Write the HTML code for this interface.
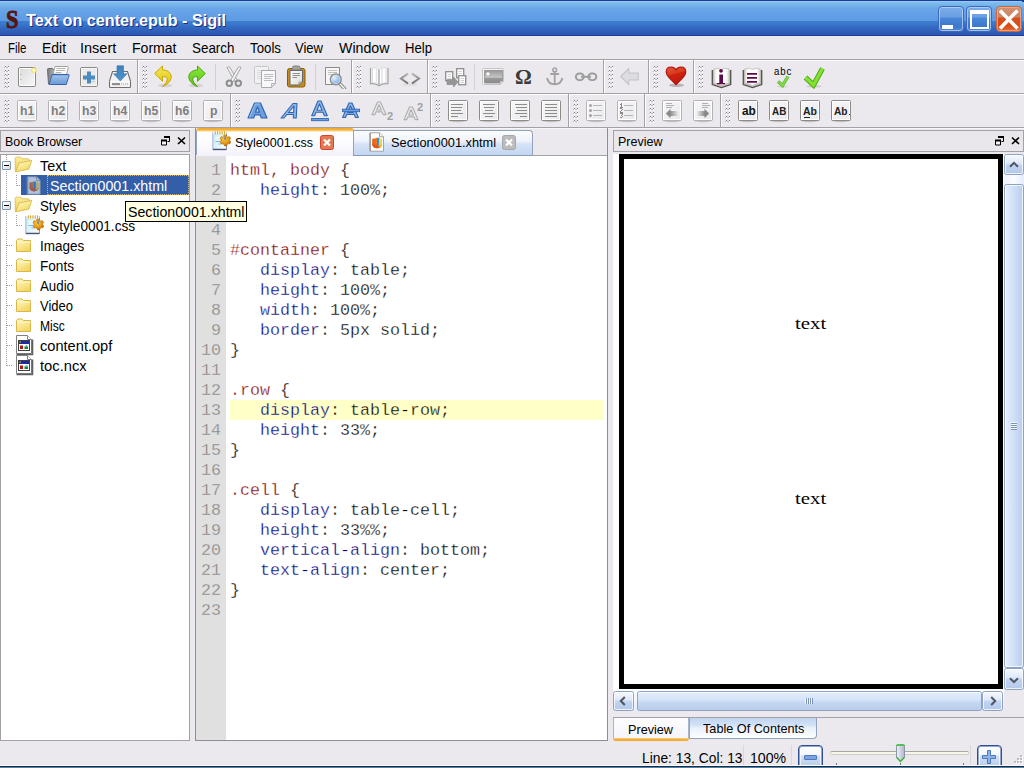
<!DOCTYPE html>
<html><head><meta charset="utf-8"><title>Sigil</title>
<style>
html,body{margin:0;padding:0;}
body{width:1024px;height:768px;overflow:hidden;position:relative;background:#ebe9ed;font-family:"Liberation Sans",sans-serif;font-size:14px;}
body div,body svg,body span.t{position:absolute;}
span.t{white-space:pre;line-height:20px;transform-origin:0 50%;display:block;}
.g{width:5px;height:23px;background:repeating-linear-gradient(to bottom,#a9a7ad 0,#a9a7ad 1px,#fff 1px,#fff 2px,rgba(0,0,0,0) 2px,rgba(0,0,0,0) 4px);}
.hb{width:18px;height:19px;border:1px solid #b4b4b8;border-radius:1px;background:linear-gradient(#fbfbfc,#e9e9ec);box-shadow:0 1px 1px rgba(0,0,0,0.18);}
</style></head><body>
<div style="left:0px;top:0px;width:1024px;height:36px;background:linear-gradient(to bottom,#1c3c9c 0,#1c3c9c 1px,#98c8f0 1px,#98c8f0 2px,#82c0ec 2px,#74b4ea 5px,#68a5e8 9px,#639fe6 15px,#5f9ae3 20.500px,#3a80d0 21px,#3873c8 25px,#3264be 29px,#2d58b2 34.500px,#1c3c9c 35px,#1c3c9c 36px);"></div>
<div style="left:0px;top:0px;width:2px;height:1px;background:#1a3a90;"></div>
<div style="left:1022px;top:0px;width:2px;height:2px;background:#1a3a90;"></div>
<span class="t" style="left:26.30px;top:10.00px;line-height:21px;font-size:16px;color:#fff;font-weight:bold;transform:scaleX(1.0104);text-shadow:1px 1px 0 #1a2f86;">Text on center.epub - Sigil</span>
<span class="t" style="left:8.00px;top:38.00px;line-height:20px;font-size:14px;color:#000;transform:scaleX(0.8201);">File</span>
<span class="t" style="left:41.50px;top:38.00px;line-height:20px;font-size:14px;color:#000;transform:scaleX(0.9949);">Edit</span>
<span class="t" style="left:80.00px;top:38.00px;line-height:20px;font-size:14px;color:#000;transform:scaleX(1.0368);">Insert</span>
<span class="t" style="left:132.00px;top:38.00px;line-height:20px;font-size:14px;color:#000;transform:scaleX(1.0037);">Format</span>
<span class="t" style="left:191.50px;top:38.00px;line-height:20px;font-size:14px;color:#000;transform:scaleX(0.9582);">Search</span>
<span class="t" style="left:249.50px;top:38.00px;line-height:20px;font-size:14px;color:#000;transform:scaleX(0.9486);">Tools</span>
<span class="t" style="left:295.00px;top:38.00px;line-height:20px;font-size:14px;color:#000;transform:scaleX(0.9305);">View</span>
<span class="t" style="left:339.00px;top:38.00px;line-height:20px;font-size:14px;color:#000;transform:scaleX(1.0142);">Window</span>
<span class="t" style="left:404.50px;top:38.00px;line-height:20px;font-size:14px;color:#000;transform:scaleX(0.9378);">Help</span>
<div style="left:0px;top:59px;width:1024px;height:1px;background:#a3a1a6;"></div>
<div style="left:0px;top:60px;width:1024px;height:1px;background:#fff;"></div>
<div style="left:0px;top:93px;width:1024px;height:1px;background:#a3a1a6;"></div>
<div style="left:0px;top:94px;width:1024px;height:1px;background:#fff;"></div>
<div style="left:0px;top:127px;width:1024px;height:1px;background:#a3a1a6;"></div>
<div style="left:0px;top:128px;width:1024px;height:1px;background:#f7f6f9;"></div>
<div style="left:137px;top:60px;width:1px;height:33px;background:#a3a1a6;"></div>
<div style="left:138px;top:61px;width:1px;height:32px;background:#fff;"></div>
<div style="left:351px;top:60px;width:1px;height:33px;background:#a3a1a6;"></div>
<div style="left:352px;top:61px;width:1px;height:32px;background:#fff;"></div>
<div style="left:427px;top:60px;width:1px;height:33px;background:#a3a1a6;"></div>
<div style="left:428px;top:61px;width:1px;height:32px;background:#fff;"></div>
<div style="left:603px;top:60px;width:1px;height:33px;background:#a3a1a6;"></div>
<div style="left:604px;top:61px;width:1px;height:32px;background:#fff;"></div>
<div style="left:648px;top:60px;width:1px;height:33px;background:#a3a1a6;"></div>
<div style="left:649px;top:61px;width:1px;height:32px;background:#fff;"></div>
<div style="left:693px;top:60px;width:1px;height:33px;background:#a3a1a6;"></div>
<div style="left:694px;top:61px;width:1px;height:32px;background:#fff;"></div>
<div style="left:230px;top:94px;width:1px;height:33px;background:#a3a1a6;"></div>
<div style="left:231px;top:95px;width:1px;height:32px;background:#fff;"></div>
<div style="left:430px;top:94px;width:1px;height:33px;background:#a3a1a6;"></div>
<div style="left:431px;top:95px;width:1px;height:32px;background:#fff;"></div>
<div style="left:568px;top:94px;width:1px;height:33px;background:#a3a1a6;"></div>
<div style="left:569px;top:95px;width:1px;height:32px;background:#fff;"></div>
<div style="left:644px;top:94px;width:1px;height:33px;background:#a3a1a6;"></div>
<div style="left:645px;top:95px;width:1px;height:32px;background:#fff;"></div>
<div style="left:720px;top:94px;width:1px;height:33px;background:#a3a1a6;"></div>
<div style="left:721px;top:95px;width:1px;height:32px;background:#fff;"></div>
<svg style="left:4px;top:66px;" width="6" height="24" viewBox="0 0 6 24"><g shape-rendering="crispEdges"><path d="M1 0h1v1h-1zM4 0h1v1h-1zM1 4h1v1h-1zM4 4h1v1h-1zM1 8h1v1h-1zM4 8h1v1h-1zM1 12h1v1h-1zM4 12h1v1h-1zM1 16h1v1h-1zM4 16h1v1h-1zM1 20h1v1h-1zM4 20h1v1h-1z" fill="#7d7b82"/><path d="M0 1h1v1h-1zM2 1h2v1h-2zM0 5h1v1h-1zM2 5h2v1h-2zM0 9h1v1h-1zM2 9h2v1h-2zM0 13h1v1h-1zM2 13h2v1h-2zM0 17h1v1h-1zM2 17h2v1h-2zM0 21h1v1h-1zM2 21h2v1h-2z" fill="#bab8bf"/><path d="M1 1h1v2h-1zM4 1h1v2h-1zM1 5h1v2h-1zM4 5h1v2h-1zM1 9h1v2h-1zM4 9h1v2h-1zM1 13h1v2h-1zM4 13h1v2h-1zM1 17h1v2h-1zM4 17h1v2h-1zM1 21h1v2h-1zM4 21h1v2h-1z" fill="#fff"/></g></svg>
<svg style="left:142px;top:66px;" width="6" height="24" viewBox="0 0 6 24"><g shape-rendering="crispEdges"><path d="M1 0h1v1h-1zM4 0h1v1h-1zM1 4h1v1h-1zM4 4h1v1h-1zM1 8h1v1h-1zM4 8h1v1h-1zM1 12h1v1h-1zM4 12h1v1h-1zM1 16h1v1h-1zM4 16h1v1h-1zM1 20h1v1h-1zM4 20h1v1h-1z" fill="#7d7b82"/><path d="M0 1h1v1h-1zM2 1h2v1h-2zM0 5h1v1h-1zM2 5h2v1h-2zM0 9h1v1h-1zM2 9h2v1h-2zM0 13h1v1h-1zM2 13h2v1h-2zM0 17h1v1h-1zM2 17h2v1h-2zM0 21h1v1h-1zM2 21h2v1h-2z" fill="#bab8bf"/><path d="M1 1h1v2h-1zM4 1h1v2h-1zM1 5h1v2h-1zM4 5h1v2h-1zM1 9h1v2h-1zM4 9h1v2h-1zM1 13h1v2h-1zM4 13h1v2h-1zM1 17h1v2h-1zM4 17h1v2h-1zM1 21h1v2h-1zM4 21h1v2h-1z" fill="#fff"/></g></svg>
<svg style="left:356px;top:66px;" width="6" height="24" viewBox="0 0 6 24"><g shape-rendering="crispEdges"><path d="M1 0h1v1h-1zM4 0h1v1h-1zM1 4h1v1h-1zM4 4h1v1h-1zM1 8h1v1h-1zM4 8h1v1h-1zM1 12h1v1h-1zM4 12h1v1h-1zM1 16h1v1h-1zM4 16h1v1h-1zM1 20h1v1h-1zM4 20h1v1h-1z" fill="#7d7b82"/><path d="M0 1h1v1h-1zM2 1h2v1h-2zM0 5h1v1h-1zM2 5h2v1h-2zM0 9h1v1h-1zM2 9h2v1h-2zM0 13h1v1h-1zM2 13h2v1h-2zM0 17h1v1h-1zM2 17h2v1h-2zM0 21h1v1h-1zM2 21h2v1h-2z" fill="#bab8bf"/><path d="M1 1h1v2h-1zM4 1h1v2h-1zM1 5h1v2h-1zM4 5h1v2h-1zM1 9h1v2h-1zM4 9h1v2h-1zM1 13h1v2h-1zM4 13h1v2h-1zM1 17h1v2h-1zM4 17h1v2h-1zM1 21h1v2h-1zM4 21h1v2h-1z" fill="#fff"/></g></svg>
<svg style="left:432px;top:66px;" width="6" height="24" viewBox="0 0 6 24"><g shape-rendering="crispEdges"><path d="M1 0h1v1h-1zM4 0h1v1h-1zM1 4h1v1h-1zM4 4h1v1h-1zM1 8h1v1h-1zM4 8h1v1h-1zM1 12h1v1h-1zM4 12h1v1h-1zM1 16h1v1h-1zM4 16h1v1h-1zM1 20h1v1h-1zM4 20h1v1h-1z" fill="#7d7b82"/><path d="M0 1h1v1h-1zM2 1h2v1h-2zM0 5h1v1h-1zM2 5h2v1h-2zM0 9h1v1h-1zM2 9h2v1h-2zM0 13h1v1h-1zM2 13h2v1h-2zM0 17h1v1h-1zM2 17h2v1h-2zM0 21h1v1h-1zM2 21h2v1h-2z" fill="#bab8bf"/><path d="M1 1h1v2h-1zM4 1h1v2h-1zM1 5h1v2h-1zM4 5h1v2h-1zM1 9h1v2h-1zM4 9h1v2h-1zM1 13h1v2h-1zM4 13h1v2h-1zM1 17h1v2h-1zM4 17h1v2h-1zM1 21h1v2h-1zM4 21h1v2h-1z" fill="#fff"/></g></svg>
<svg style="left:608px;top:66px;" width="6" height="24" viewBox="0 0 6 24"><g shape-rendering="crispEdges"><path d="M1 0h1v1h-1zM4 0h1v1h-1zM1 4h1v1h-1zM4 4h1v1h-1zM1 8h1v1h-1zM4 8h1v1h-1zM1 12h1v1h-1zM4 12h1v1h-1zM1 16h1v1h-1zM4 16h1v1h-1zM1 20h1v1h-1zM4 20h1v1h-1z" fill="#7d7b82"/><path d="M0 1h1v1h-1zM2 1h2v1h-2zM0 5h1v1h-1zM2 5h2v1h-2zM0 9h1v1h-1zM2 9h2v1h-2zM0 13h1v1h-1zM2 13h2v1h-2zM0 17h1v1h-1zM2 17h2v1h-2zM0 21h1v1h-1zM2 21h2v1h-2z" fill="#bab8bf"/><path d="M1 1h1v2h-1zM4 1h1v2h-1zM1 5h1v2h-1zM4 5h1v2h-1zM1 9h1v2h-1zM4 9h1v2h-1zM1 13h1v2h-1zM4 13h1v2h-1zM1 17h1v2h-1zM4 17h1v2h-1zM1 21h1v2h-1zM4 21h1v2h-1z" fill="#fff"/></g></svg>
<svg style="left:653px;top:66px;" width="6" height="24" viewBox="0 0 6 24"><g shape-rendering="crispEdges"><path d="M1 0h1v1h-1zM4 0h1v1h-1zM1 4h1v1h-1zM4 4h1v1h-1zM1 8h1v1h-1zM4 8h1v1h-1zM1 12h1v1h-1zM4 12h1v1h-1zM1 16h1v1h-1zM4 16h1v1h-1zM1 20h1v1h-1zM4 20h1v1h-1z" fill="#7d7b82"/><path d="M0 1h1v1h-1zM2 1h2v1h-2zM0 5h1v1h-1zM2 5h2v1h-2zM0 9h1v1h-1zM2 9h2v1h-2zM0 13h1v1h-1zM2 13h2v1h-2zM0 17h1v1h-1zM2 17h2v1h-2zM0 21h1v1h-1zM2 21h2v1h-2z" fill="#bab8bf"/><path d="M1 1h1v2h-1zM4 1h1v2h-1zM1 5h1v2h-1zM4 5h1v2h-1zM1 9h1v2h-1zM4 9h1v2h-1zM1 13h1v2h-1zM4 13h1v2h-1zM1 17h1v2h-1zM4 17h1v2h-1zM1 21h1v2h-1zM4 21h1v2h-1z" fill="#fff"/></g></svg>
<svg style="left:698px;top:66px;" width="6" height="24" viewBox="0 0 6 24"><g shape-rendering="crispEdges"><path d="M1 0h1v1h-1zM4 0h1v1h-1zM1 4h1v1h-1zM4 4h1v1h-1zM1 8h1v1h-1zM4 8h1v1h-1zM1 12h1v1h-1zM4 12h1v1h-1zM1 16h1v1h-1zM4 16h1v1h-1zM1 20h1v1h-1zM4 20h1v1h-1z" fill="#7d7b82"/><path d="M0 1h1v1h-1zM2 1h2v1h-2zM0 5h1v1h-1zM2 5h2v1h-2zM0 9h1v1h-1zM2 9h2v1h-2zM0 13h1v1h-1zM2 13h2v1h-2zM0 17h1v1h-1zM2 17h2v1h-2zM0 21h1v1h-1zM2 21h2v1h-2z" fill="#bab8bf"/><path d="M1 1h1v2h-1zM4 1h1v2h-1zM1 5h1v2h-1zM4 5h1v2h-1zM1 9h1v2h-1zM4 9h1v2h-1zM1 13h1v2h-1zM4 13h1v2h-1zM1 17h1v2h-1zM4 17h1v2h-1zM1 21h1v2h-1zM4 21h1v2h-1z" fill="#fff"/></g></svg>
<svg style="left:4px;top:100px;" width="6" height="24" viewBox="0 0 6 24"><g shape-rendering="crispEdges"><path d="M1 0h1v1h-1zM4 0h1v1h-1zM1 4h1v1h-1zM4 4h1v1h-1zM1 8h1v1h-1zM4 8h1v1h-1zM1 12h1v1h-1zM4 12h1v1h-1zM1 16h1v1h-1zM4 16h1v1h-1zM1 20h1v1h-1zM4 20h1v1h-1z" fill="#7d7b82"/><path d="M0 1h1v1h-1zM2 1h2v1h-2zM0 5h1v1h-1zM2 5h2v1h-2zM0 9h1v1h-1zM2 9h2v1h-2zM0 13h1v1h-1zM2 13h2v1h-2zM0 17h1v1h-1zM2 17h2v1h-2zM0 21h1v1h-1zM2 21h2v1h-2z" fill="#bab8bf"/><path d="M1 1h1v2h-1zM4 1h1v2h-1zM1 5h1v2h-1zM4 5h1v2h-1zM1 9h1v2h-1zM4 9h1v2h-1zM1 13h1v2h-1zM4 13h1v2h-1zM1 17h1v2h-1zM4 17h1v2h-1zM1 21h1v2h-1zM4 21h1v2h-1z" fill="#fff"/></g></svg>
<svg style="left:235px;top:100px;" width="6" height="24" viewBox="0 0 6 24"><g shape-rendering="crispEdges"><path d="M1 0h1v1h-1zM4 0h1v1h-1zM1 4h1v1h-1zM4 4h1v1h-1zM1 8h1v1h-1zM4 8h1v1h-1zM1 12h1v1h-1zM4 12h1v1h-1zM1 16h1v1h-1zM4 16h1v1h-1zM1 20h1v1h-1zM4 20h1v1h-1z" fill="#7d7b82"/><path d="M0 1h1v1h-1zM2 1h2v1h-2zM0 5h1v1h-1zM2 5h2v1h-2zM0 9h1v1h-1zM2 9h2v1h-2zM0 13h1v1h-1zM2 13h2v1h-2zM0 17h1v1h-1zM2 17h2v1h-2zM0 21h1v1h-1zM2 21h2v1h-2z" fill="#bab8bf"/><path d="M1 1h1v2h-1zM4 1h1v2h-1zM1 5h1v2h-1zM4 5h1v2h-1zM1 9h1v2h-1zM4 9h1v2h-1zM1 13h1v2h-1zM4 13h1v2h-1zM1 17h1v2h-1zM4 17h1v2h-1zM1 21h1v2h-1zM4 21h1v2h-1z" fill="#fff"/></g></svg>
<svg style="left:435px;top:100px;" width="6" height="24" viewBox="0 0 6 24"><g shape-rendering="crispEdges"><path d="M1 0h1v1h-1zM4 0h1v1h-1zM1 4h1v1h-1zM4 4h1v1h-1zM1 8h1v1h-1zM4 8h1v1h-1zM1 12h1v1h-1zM4 12h1v1h-1zM1 16h1v1h-1zM4 16h1v1h-1zM1 20h1v1h-1zM4 20h1v1h-1z" fill="#7d7b82"/><path d="M0 1h1v1h-1zM2 1h2v1h-2zM0 5h1v1h-1zM2 5h2v1h-2zM0 9h1v1h-1zM2 9h2v1h-2zM0 13h1v1h-1zM2 13h2v1h-2zM0 17h1v1h-1zM2 17h2v1h-2zM0 21h1v1h-1zM2 21h2v1h-2z" fill="#bab8bf"/><path d="M1 1h1v2h-1zM4 1h1v2h-1zM1 5h1v2h-1zM4 5h1v2h-1zM1 9h1v2h-1zM4 9h1v2h-1zM1 13h1v2h-1zM4 13h1v2h-1zM1 17h1v2h-1zM4 17h1v2h-1zM1 21h1v2h-1zM4 21h1v2h-1z" fill="#fff"/></g></svg>
<svg style="left:573px;top:100px;" width="6" height="24" viewBox="0 0 6 24"><g shape-rendering="crispEdges"><path d="M1 0h1v1h-1zM4 0h1v1h-1zM1 4h1v1h-1zM4 4h1v1h-1zM1 8h1v1h-1zM4 8h1v1h-1zM1 12h1v1h-1zM4 12h1v1h-1zM1 16h1v1h-1zM4 16h1v1h-1zM1 20h1v1h-1zM4 20h1v1h-1z" fill="#7d7b82"/><path d="M0 1h1v1h-1zM2 1h2v1h-2zM0 5h1v1h-1zM2 5h2v1h-2zM0 9h1v1h-1zM2 9h2v1h-2zM0 13h1v1h-1zM2 13h2v1h-2zM0 17h1v1h-1zM2 17h2v1h-2zM0 21h1v1h-1zM2 21h2v1h-2z" fill="#bab8bf"/><path d="M1 1h1v2h-1zM4 1h1v2h-1zM1 5h1v2h-1zM4 5h1v2h-1zM1 9h1v2h-1zM4 9h1v2h-1zM1 13h1v2h-1zM4 13h1v2h-1zM1 17h1v2h-1zM4 17h1v2h-1zM1 21h1v2h-1zM4 21h1v2h-1z" fill="#fff"/></g></svg>
<svg style="left:649px;top:100px;" width="6" height="24" viewBox="0 0 6 24"><g shape-rendering="crispEdges"><path d="M1 0h1v1h-1zM4 0h1v1h-1zM1 4h1v1h-1zM4 4h1v1h-1zM1 8h1v1h-1zM4 8h1v1h-1zM1 12h1v1h-1zM4 12h1v1h-1zM1 16h1v1h-1zM4 16h1v1h-1zM1 20h1v1h-1zM4 20h1v1h-1z" fill="#7d7b82"/><path d="M0 1h1v1h-1zM2 1h2v1h-2zM0 5h1v1h-1zM2 5h2v1h-2zM0 9h1v1h-1zM2 9h2v1h-2zM0 13h1v1h-1zM2 13h2v1h-2zM0 17h1v1h-1zM2 17h2v1h-2zM0 21h1v1h-1zM2 21h2v1h-2z" fill="#bab8bf"/><path d="M1 1h1v2h-1zM4 1h1v2h-1zM1 5h1v2h-1zM4 5h1v2h-1zM1 9h1v2h-1zM4 9h1v2h-1zM1 13h1v2h-1zM4 13h1v2h-1zM1 17h1v2h-1zM4 17h1v2h-1zM1 21h1v2h-1zM4 21h1v2h-1z" fill="#fff"/></g></svg>
<svg style="left:725px;top:100px;" width="6" height="24" viewBox="0 0 6 24"><g shape-rendering="crispEdges"><path d="M1 0h1v1h-1zM4 0h1v1h-1zM1 4h1v1h-1zM4 4h1v1h-1zM1 8h1v1h-1zM4 8h1v1h-1zM1 12h1v1h-1zM4 12h1v1h-1zM1 16h1v1h-1zM4 16h1v1h-1zM1 20h1v1h-1zM4 20h1v1h-1z" fill="#7d7b82"/><path d="M0 1h1v1h-1zM2 1h2v1h-2zM0 5h1v1h-1zM2 5h2v1h-2zM0 9h1v1h-1zM2 9h2v1h-2zM0 13h1v1h-1zM2 13h2v1h-2zM0 17h1v1h-1zM2 17h2v1h-2zM0 21h1v1h-1zM2 21h2v1h-2z" fill="#bab8bf"/><path d="M1 1h1v2h-1zM4 1h1v2h-1zM1 5h1v2h-1zM4 5h1v2h-1zM1 9h1v2h-1zM4 9h1v2h-1zM1 13h1v2h-1zM4 13h1v2h-1zM1 17h1v2h-1zM4 17h1v2h-1zM1 21h1v2h-1zM4 21h1v2h-1z" fill="#fff"/></g></svg>
<div style="left:215px;top:64px;width:1px;height:26px;background:#d2d0d5;"></div>
<div style="left:315px;top:64px;width:1px;height:26px;background:#d2d0d5;"></div>
<div style="left:474px;top:64px;width:1px;height:26px;background:#d2d0d5;"></div>
<div style="left:0px;top:130px;width:190px;height:22px;box-sizing:border-box;border:1px solid #a3a1a6;border-left:1px solid #a3a1a6;background:#e9e7eb;"></div>
<span class="t" style="left:4.70px;top:133.00px;line-height:18px;font-size:12.7px;color:#000;transform:scaleX(0.9779);">Book Browser</span>
<svg style="left:161px;top:136px;" width="9" height="10" viewBox="0 0 9 10"><path d="M3.500 1h5v4.500h-2" fill="none" stroke="#000" stroke-width="1"/><rect x="3" y="0" width="6" height="2" fill="#000"/><path d="M0.500 4.500h5v4.500h-5z" fill="#f4f3f6" stroke="#000" stroke-width="1"/><rect x="0" y="3.500" width="6" height="2" fill="#000"/></svg>
<svg style="left:177px;top:136px;" width="9" height="9" viewBox="0 0 9 9"><path d="M1 1.500l7 6.500M8 1.500l-7 6.500" fill="none" stroke="#000" stroke-width="1.600"/></svg>
<div style="left:0px;top:154px;width:190px;height:587px;box-sizing:border-box;border:1px solid #a3a1a6;background:#fff;"></div>
<div style="left:6px;top:155px;width:1px;height:211px;background:repeating-linear-gradient(to bottom,#a0a0a0 0,#a0a0a0 1px,rgba(0,0,0,0) 1px,rgba(0,0,0,0) 2px);"></div>
<div style="left:16px;top:175px;width:1px;height:11px;background:repeating-linear-gradient(to bottom,#a0a0a0 0,#a0a0a0 1px,rgba(0,0,0,0) 1px,rgba(0,0,0,0) 2px);"></div>
<div style="left:17px;top:185px;width:5px;height:1px;background:repeating-linear-gradient(to right,#a0a0a0 0,#a0a0a0 1px,rgba(0,0,0,0) 1px,rgba(0,0,0,0) 2px);"></div>
<div style="left:16px;top:215px;width:1px;height:11px;background:repeating-linear-gradient(to bottom,#a0a0a0 0,#a0a0a0 1px,rgba(0,0,0,0) 1px,rgba(0,0,0,0) 2px);"></div>
<div style="left:17px;top:225px;width:5px;height:1px;background:repeating-linear-gradient(to right,#a0a0a0 0,#a0a0a0 1px,rgba(0,0,0,0) 1px,rgba(0,0,0,0) 2px);"></div>
<div style="left:7px;top:245px;width:5px;height:1px;background:repeating-linear-gradient(to right,#a0a0a0 0,#a0a0a0 1px,rgba(0,0,0,0) 1px,rgba(0,0,0,0) 2px);"></div>
<div style="left:7px;top:265px;width:5px;height:1px;background:repeating-linear-gradient(to right,#a0a0a0 0,#a0a0a0 1px,rgba(0,0,0,0) 1px,rgba(0,0,0,0) 2px);"></div>
<div style="left:7px;top:285px;width:5px;height:1px;background:repeating-linear-gradient(to right,#a0a0a0 0,#a0a0a0 1px,rgba(0,0,0,0) 1px,rgba(0,0,0,0) 2px);"></div>
<div style="left:7px;top:305px;width:5px;height:1px;background:repeating-linear-gradient(to right,#a0a0a0 0,#a0a0a0 1px,rgba(0,0,0,0) 1px,rgba(0,0,0,0) 2px);"></div>
<div style="left:7px;top:325px;width:5px;height:1px;background:repeating-linear-gradient(to right,#a0a0a0 0,#a0a0a0 1px,rgba(0,0,0,0) 1px,rgba(0,0,0,0) 2px);"></div>
<div style="left:7px;top:345px;width:5px;height:1px;background:repeating-linear-gradient(to right,#a0a0a0 0,#a0a0a0 1px,rgba(0,0,0,0) 1px,rgba(0,0,0,0) 2px);"></div>
<div style="left:7px;top:365px;width:5px;height:1px;background:repeating-linear-gradient(to right,#a0a0a0 0,#a0a0a0 1px,rgba(0,0,0,0) 1px,rgba(0,0,0,0) 2px);"></div>
<div style="left:21px;top:175px;width:168px;height:20px;background:#335ea8;"></div>
<div style="left:47px;top:175px;width:142px;height:20px;box-sizing:border-box;border:1px dotted #e8b84a;"></div>
<div style="left:2px;top:161px;width:9px;height:9px;box-sizing:border-box;border:1px solid #7b9ab8;border-radius:1px;background:linear-gradient(135deg,#fff 30%,#d8d4c6);"></div>
<div style="left:4px;top:165px;width:5px;height:1px;background:#000;"></div>
<div style="left:2px;top:201px;width:9px;height:9px;box-sizing:border-box;border:1px solid #7b9ab8;border-radius:1px;background:linear-gradient(135deg,#fff 30%,#d8d4c6);"></div>
<div style="left:4px;top:205px;width:5px;height:1px;background:#000;"></div>
<svg style="left:14px;top:156px;" width="19" height="17" viewBox="0 0 19 17"><defs><linearGradient id="fo" x1="0" y1="0" x2="0.600" y2="1"><stop offset="0" stop-color="#fffde4"/><stop offset="0.500" stop-color="#fbec96"/><stop offset="1" stop-color="#f3d45c"/></linearGradient>
<linearGradient id="fob" x1="0" y1="0" x2="0" y2="1"><stop offset="0" stop-color="#fbee98"/><stop offset="1" stop-color="#efcf5c"/></linearGradient></defs>
<path d="M1.200 15.500V2.400q0-1.200 1.200-1.200h4.300l1.500 1.600h6q1.200 0 1.200 1.200v3" fill="url(#fob)" stroke="#dcb850" stroke-width="0.800"/>
<path d="M1.600 15.800L5 7L17.800 4.400L14.800 13.200Z" fill="url(#fo)" stroke="#d6b044" stroke-width="0.800" stroke-linejoin="round"/></svg>
<svg style="left:14px;top:196px;" width="19" height="17" viewBox="0 0 19 17"><defs><linearGradient id="fo" x1="0" y1="0" x2="0.600" y2="1"><stop offset="0" stop-color="#fffde4"/><stop offset="0.500" stop-color="#fbec96"/><stop offset="1" stop-color="#f3d45c"/></linearGradient>
<linearGradient id="fob" x1="0" y1="0" x2="0" y2="1"><stop offset="0" stop-color="#fbee98"/><stop offset="1" stop-color="#efcf5c"/></linearGradient></defs>
<path d="M1.200 15.500V2.400q0-1.200 1.200-1.200h4.300l1.500 1.600h6q1.200 0 1.200 1.200v3" fill="url(#fob)" stroke="#dcb850" stroke-width="0.800"/>
<path d="M1.600 15.800L5 7L17.800 4.400L14.800 13.200Z" fill="url(#fo)" stroke="#d6b044" stroke-width="0.800" stroke-linejoin="round"/></svg>
<svg style="left:16px;top:238px;" width="16" height="15" viewBox="0 0 16 15"><defs><linearGradient id="fc" x1="0" y1="0" x2="0.6" y2="1"><stop offset="0" stop-color="#fffacc"/><stop offset="1" stop-color="#f3d665"/></linearGradient></defs>
<path d="M0.5 13.5V2.5l1.2-1.5h4.3l1.5 1.5h7v11Z" fill="url(#fc)" stroke="#d8b64a" stroke-width="1"/>
<path d="M1 4.2h13.5" stroke="#fff8c0" stroke-width="1" fill="none"/></svg>
<svg style="left:16px;top:258px;" width="16" height="15" viewBox="0 0 16 15"><defs><linearGradient id="fc" x1="0" y1="0" x2="0.6" y2="1"><stop offset="0" stop-color="#fffacc"/><stop offset="1" stop-color="#f3d665"/></linearGradient></defs>
<path d="M0.5 13.5V2.5l1.2-1.5h4.3l1.5 1.5h7v11Z" fill="url(#fc)" stroke="#d8b64a" stroke-width="1"/>
<path d="M1 4.2h13.5" stroke="#fff8c0" stroke-width="1" fill="none"/></svg>
<svg style="left:16px;top:278px;" width="16" height="15" viewBox="0 0 16 15"><defs><linearGradient id="fc" x1="0" y1="0" x2="0.6" y2="1"><stop offset="0" stop-color="#fffacc"/><stop offset="1" stop-color="#f3d665"/></linearGradient></defs>
<path d="M0.5 13.5V2.5l1.2-1.5h4.3l1.5 1.5h7v11Z" fill="url(#fc)" stroke="#d8b64a" stroke-width="1"/>
<path d="M1 4.2h13.5" stroke="#fff8c0" stroke-width="1" fill="none"/></svg>
<svg style="left:16px;top:298px;" width="16" height="15" viewBox="0 0 16 15"><defs><linearGradient id="fc" x1="0" y1="0" x2="0.6" y2="1"><stop offset="0" stop-color="#fffacc"/><stop offset="1" stop-color="#f3d665"/></linearGradient></defs>
<path d="M0.5 13.5V2.5l1.2-1.5h4.3l1.5 1.5h7v11Z" fill="url(#fc)" stroke="#d8b64a" stroke-width="1"/>
<path d="M1 4.2h13.5" stroke="#fff8c0" stroke-width="1" fill="none"/></svg>
<svg style="left:16px;top:318px;" width="16" height="15" viewBox="0 0 16 15"><defs><linearGradient id="fc" x1="0" y1="0" x2="0.6" y2="1"><stop offset="0" stop-color="#fffacc"/><stop offset="1" stop-color="#f3d665"/></linearGradient></defs>
<path d="M0.5 13.5V2.5l1.2-1.5h4.3l1.5 1.5h7v11Z" fill="url(#fc)" stroke="#d8b64a" stroke-width="1"/>
<path d="M1 4.2h13.5" stroke="#fff8c0" stroke-width="1" fill="none"/></svg>
<svg style="left:15px;top:335px;" width="19" height="21" viewBox="0 0 19 21"><path d="M1.5 0.5h11l4 4v14h-15Z" fill="#fff" stroke="#808080" stroke-width="1"/>
<path d="M17.5 4.5v15h-16" fill="none" stroke="#606060" stroke-width="1.6"/>
<path d="M12.5 0.5v4h4" fill="#fff" stroke="#808080" stroke-width="1"/>
<rect x="3.5" y="5.5" width="11" height="10" fill="#fff" stroke="#404040" stroke-width="1"/>
<rect x="4" y="6" width="10" height="3" fill="#1c2a9c"/>
<rect x="4.6" y="6.5" width="1.2" height="1.2" fill="#f0d020"/>
<rect x="5" y="10.5" width="3" height="3.5" fill="#b01818"/>
<rect x="9.5" y="11.5" width="3.5" height="2.5" fill="#188a28"/>
<path d="M9.5 11.5l2-1.5 2 1.5" fill="#30a8e8"/></svg>
<svg style="left:15px;top:355px;" width="19" height="21" viewBox="0 0 19 21"><path d="M1.5 0.5h11l4 4v14h-15Z" fill="#fff" stroke="#808080" stroke-width="1"/>
<path d="M17.5 4.5v15h-16" fill="none" stroke="#606060" stroke-width="1.6"/>
<path d="M12.5 0.5v4h4" fill="#fff" stroke="#808080" stroke-width="1"/>
<rect x="3.5" y="5.5" width="11" height="10" fill="#fff" stroke="#404040" stroke-width="1"/>
<rect x="4" y="6" width="10" height="3" fill="#1c2a9c"/>
<rect x="4.6" y="6.5" width="1.2" height="1.2" fill="#f0d020"/>
<rect x="5" y="10.5" width="3" height="3.5" fill="#b01818"/>
<rect x="9.5" y="11.5" width="3.5" height="2.5" fill="#188a28"/>
<path d="M9.5 11.5l2-1.5 2 1.5" fill="#30a8e8"/></svg>
<span class="t" style="left:39.50px;top:156.00px;line-height:20px;font-size:14px;color:#000;transform:scaleX(1.0244);">Text</span>
<span class="t" style="left:49.60px;top:176.00px;line-height:20px;font-size:14px;color:#fff;transform:scaleX(1.0176);">Section0001.xhtml</span>
<span class="t" style="left:39.80px;top:196.00px;line-height:20px;font-size:14px;color:#000;transform:scaleX(0.9495);">Styles</span>
<span class="t" style="left:49.60px;top:216.00px;line-height:20px;font-size:14px;color:#000;transform:scaleX(0.9776);">Style0001.css</span>
<span class="t" style="left:39.60px;top:236.00px;line-height:20px;font-size:14px;color:#000;transform:scaleX(0.9628);">Images</span>
<span class="t" style="left:39.80px;top:256.00px;line-height:20px;font-size:14px;color:#000;transform:scaleX(0.9711);">Fonts</span>
<span class="t" style="left:39.50px;top:276.00px;line-height:20px;font-size:14px;color:#000;transform:scaleX(0.9496);">Audio</span>
<span class="t" style="left:39.50px;top:296.00px;line-height:20px;font-size:14px;color:#000;transform:scaleX(0.9282);">Video</span>
<span class="t" style="left:39.80px;top:316.00px;line-height:20px;font-size:14px;color:#000;transform:scaleX(0.8619);">Misc</span>
<span class="t" style="left:39.50px;top:336.00px;line-height:20px;font-size:14px;color:#000;transform:scaleX(1.0438);">content.opf</span>
<span class="t" style="left:39.50px;top:356.00px;line-height:20px;font-size:14px;color:#000;transform:scaleX(1.0530);">toc.ncx</span>
<div style="left:195px;top:128px;width:413px;height:613px;box-sizing:border-box;border:1px solid #8f8d92;border-top:none;"></div>
<div style="left:196px;top:155px;width:411px;height:585px;background:#fff;border-top:1px solid #a3a1a6;box-sizing:border-box;"></div>
<div style="left:196px;top:156px;width:30px;height:584px;background:#e0e0e0;"></div>
<div style="left:230px;top:400px;width:374px;height:20px;background:#ffffc8;"></div>
<div style="left:196px;top:128px;width:158px;height:28px;background:linear-gradient(to bottom,#f0a428 0,#f6b640 2px,#fbd68a 3px,#fff 4px,#fdfdff 14px,#f3f2fa 27px);border-radius:3px 3px 0 0;"></div>
<div style="left:196px;top:131px;width:1px;height:24px;background:#8fa4c6;"></div>
<div style="left:353px;top:130px;width:180px;height:26px;box-sizing:border-box;border:1px solid #93a3be;border-bottom:1px solid #8b9bb8;border-radius:0 4px 0 0;background:linear-gradient(to bottom,#fbfcfe 0,#eef3fb 10px,#d6e3f6 13px,#c2d6f2 24px);"></div>
<span class="t" style="left:235.30px;top:134.00px;line-height:18px;font-size:12.7px;color:#000;transform:scaleX(0.9866);">Style0001.css</span>
<span class="t" style="left:391.00px;top:134.00px;line-height:18px;font-size:12.7px;color:#000;transform:scaleX(1.0069);">Section0001.xhtml</span>
<svg style="left:320px;top:135px;" width="14" height="15" viewBox="0 0 14 15"><rect x="0.5" y="0.5" width="13" height="14" rx="2" fill="#e07a52" stroke="#d9402c"/><path d="M4 4.5l6 6M10 4.5l-6 6" stroke="#fff" stroke-width="2.2" fill="none"/></svg>
<svg style="left:502px;top:135px;" width="14" height="15" viewBox="0 0 14 15"><rect x="0.5" y="0.5" width="13" height="14" rx="2" fill="#bcbcbe" stroke="#a6a6a8"/><path d="M4 4.5l6 6M10 4.5l-6 6" stroke="#fff" stroke-width="2.2" fill="none"/></svg>
<span class="t" style="left:211.00px;top:159.00px;line-height:23px;font-size:16.67px;color:#808080;font-family:'Liberation Mono',monospace;-webkit-text-stroke:0.3px #e0e0e0;">1</span>
<span class="t" style="left:230.00px;top:159.00px;line-height:23px;font-size:16.67px;color:#800000;font-family:'Liberation Mono',monospace;-webkit-text-stroke:0.3px #fff;">html, body</span>
<span class="t" style="left:340.00px;top:159.00px;line-height:23px;font-size:16.67px;color:#000;font-family:'Liberation Mono',monospace;-webkit-text-stroke:0.3px #fff;">{</span>
<span class="t" style="left:211.00px;top:179.00px;line-height:23px;font-size:16.67px;color:#808080;font-family:'Liberation Mono',monospace;-webkit-text-stroke:0.3px #e0e0e0;">2</span>
<span class="t" style="left:260.00px;top:179.00px;line-height:23px;font-size:16.67px;color:#000080;font-family:'Liberation Mono',monospace;-webkit-text-stroke:0.3px #fff;">height</span>
<span class="t" style="left:320.00px;top:179.00px;line-height:23px;font-size:16.67px;color:#000;font-family:'Liberation Mono',monospace;-webkit-text-stroke:0.3px #fff;">: 100%;</span>
<span class="t" style="left:211.00px;top:199.00px;line-height:23px;font-size:16.67px;color:#808080;font-family:'Liberation Mono',monospace;-webkit-text-stroke:0.3px #e0e0e0;">3</span>
<span class="t" style="left:211.00px;top:219.00px;line-height:23px;font-size:16.67px;color:#808080;font-family:'Liberation Mono',monospace;-webkit-text-stroke:0.3px #e0e0e0;">4</span>
<span class="t" style="left:211.00px;top:239.00px;line-height:23px;font-size:16.67px;color:#808080;font-family:'Liberation Mono',monospace;-webkit-text-stroke:0.3px #e0e0e0;">5</span>
<span class="t" style="left:230.00px;top:239.00px;line-height:23px;font-size:16.67px;color:#800000;font-family:'Liberation Mono',monospace;-webkit-text-stroke:0.3px #fff;">#container</span>
<span class="t" style="left:340.00px;top:239.00px;line-height:23px;font-size:16.67px;color:#000;font-family:'Liberation Mono',monospace;-webkit-text-stroke:0.3px #fff;">{</span>
<span class="t" style="left:211.00px;top:259.00px;line-height:23px;font-size:16.67px;color:#808080;font-family:'Liberation Mono',monospace;-webkit-text-stroke:0.3px #e0e0e0;">6</span>
<span class="t" style="left:260.00px;top:259.00px;line-height:23px;font-size:16.67px;color:#000080;font-family:'Liberation Mono',monospace;-webkit-text-stroke:0.3px #fff;">display</span>
<span class="t" style="left:330.00px;top:259.00px;line-height:23px;font-size:16.67px;color:#000;font-family:'Liberation Mono',monospace;-webkit-text-stroke:0.3px #fff;">: table;</span>
<span class="t" style="left:211.00px;top:279.00px;line-height:23px;font-size:16.67px;color:#808080;font-family:'Liberation Mono',monospace;-webkit-text-stroke:0.3px #e0e0e0;">7</span>
<span class="t" style="left:260.00px;top:279.00px;line-height:23px;font-size:16.67px;color:#000080;font-family:'Liberation Mono',monospace;-webkit-text-stroke:0.3px #fff;">height</span>
<span class="t" style="left:320.00px;top:279.00px;line-height:23px;font-size:16.67px;color:#000;font-family:'Liberation Mono',monospace;-webkit-text-stroke:0.3px #fff;">: 100%;</span>
<span class="t" style="left:211.00px;top:299.00px;line-height:23px;font-size:16.67px;color:#808080;font-family:'Liberation Mono',monospace;-webkit-text-stroke:0.3px #e0e0e0;">8</span>
<span class="t" style="left:260.00px;top:299.00px;line-height:23px;font-size:16.67px;color:#000080;font-family:'Liberation Mono',monospace;-webkit-text-stroke:0.3px #fff;">width</span>
<span class="t" style="left:310.00px;top:299.00px;line-height:23px;font-size:16.67px;color:#000;font-family:'Liberation Mono',monospace;-webkit-text-stroke:0.3px #fff;">: 100%;</span>
<span class="t" style="left:211.00px;top:319.00px;line-height:23px;font-size:16.67px;color:#808080;font-family:'Liberation Mono',monospace;-webkit-text-stroke:0.3px #e0e0e0;">9</span>
<span class="t" style="left:260.00px;top:319.00px;line-height:23px;font-size:16.67px;color:#000080;font-family:'Liberation Mono',monospace;-webkit-text-stroke:0.3px #fff;">border</span>
<span class="t" style="left:320.00px;top:319.00px;line-height:23px;font-size:16.67px;color:#000;font-family:'Liberation Mono',monospace;-webkit-text-stroke:0.3px #fff;">: 5px solid;</span>
<span class="t" style="left:201.00px;top:339.00px;line-height:23px;font-size:16.67px;color:#808080;font-family:'Liberation Mono',monospace;-webkit-text-stroke:0.3px #e0e0e0;">10</span>
<span class="t" style="left:230.00px;top:339.00px;line-height:23px;font-size:16.67px;color:#000;font-family:'Liberation Mono',monospace;-webkit-text-stroke:0.3px #fff;">}</span>
<span class="t" style="left:201.00px;top:359.00px;line-height:23px;font-size:16.67px;color:#808080;font-family:'Liberation Mono',monospace;-webkit-text-stroke:0.3px #e0e0e0;">11</span>
<span class="t" style="left:201.00px;top:379.00px;line-height:23px;font-size:16.67px;color:#808080;font-family:'Liberation Mono',monospace;-webkit-text-stroke:0.3px #e0e0e0;">12</span>
<span class="t" style="left:230.00px;top:379.00px;line-height:23px;font-size:16.67px;color:#800000;font-family:'Liberation Mono',monospace;-webkit-text-stroke:0.3px #fff;">.row</span>
<span class="t" style="left:280.00px;top:379.00px;line-height:23px;font-size:16.67px;color:#000;font-family:'Liberation Mono',monospace;-webkit-text-stroke:0.3px #fff;">{</span>
<span class="t" style="left:201.00px;top:399.00px;line-height:23px;font-size:16.67px;color:#808080;font-family:'Liberation Mono',monospace;-webkit-text-stroke:0.3px #e0e0e0;">13</span>
<span class="t" style="left:260.00px;top:399.00px;line-height:23px;font-size:16.67px;color:#000080;font-family:'Liberation Mono',monospace;-webkit-text-stroke:0.3px #ffffc8;">display</span>
<span class="t" style="left:330.00px;top:399.00px;line-height:23px;font-size:16.67px;color:#000;font-family:'Liberation Mono',monospace;-webkit-text-stroke:0.3px #ffffc8;">: table-row;</span>
<span class="t" style="left:201.00px;top:419.00px;line-height:23px;font-size:16.67px;color:#808080;font-family:'Liberation Mono',monospace;-webkit-text-stroke:0.3px #e0e0e0;">14</span>
<span class="t" style="left:260.00px;top:419.00px;line-height:23px;font-size:16.67px;color:#000080;font-family:'Liberation Mono',monospace;-webkit-text-stroke:0.3px #fff;">height</span>
<span class="t" style="left:320.00px;top:419.00px;line-height:23px;font-size:16.67px;color:#000;font-family:'Liberation Mono',monospace;-webkit-text-stroke:0.3px #fff;">: 33%;</span>
<span class="t" style="left:201.00px;top:439.00px;line-height:23px;font-size:16.67px;color:#808080;font-family:'Liberation Mono',monospace;-webkit-text-stroke:0.3px #e0e0e0;">15</span>
<span class="t" style="left:230.00px;top:439.00px;line-height:23px;font-size:16.67px;color:#000;font-family:'Liberation Mono',monospace;-webkit-text-stroke:0.3px #fff;">}</span>
<span class="t" style="left:201.00px;top:459.00px;line-height:23px;font-size:16.67px;color:#808080;font-family:'Liberation Mono',monospace;-webkit-text-stroke:0.3px #e0e0e0;">16</span>
<span class="t" style="left:201.00px;top:479.00px;line-height:23px;font-size:16.67px;color:#808080;font-family:'Liberation Mono',monospace;-webkit-text-stroke:0.3px #e0e0e0;">17</span>
<span class="t" style="left:230.00px;top:479.00px;line-height:23px;font-size:16.67px;color:#800000;font-family:'Liberation Mono',monospace;-webkit-text-stroke:0.3px #fff;">.cell</span>
<span class="t" style="left:290.00px;top:479.00px;line-height:23px;font-size:16.67px;color:#000;font-family:'Liberation Mono',monospace;-webkit-text-stroke:0.3px #fff;">{</span>
<span class="t" style="left:201.00px;top:499.00px;line-height:23px;font-size:16.67px;color:#808080;font-family:'Liberation Mono',monospace;-webkit-text-stroke:0.3px #e0e0e0;">18</span>
<span class="t" style="left:260.00px;top:499.00px;line-height:23px;font-size:16.67px;color:#000080;font-family:'Liberation Mono',monospace;-webkit-text-stroke:0.3px #fff;">display</span>
<span class="t" style="left:330.00px;top:499.00px;line-height:23px;font-size:16.67px;color:#000;font-family:'Liberation Mono',monospace;-webkit-text-stroke:0.3px #fff;">: table-cell;</span>
<span class="t" style="left:201.00px;top:519.00px;line-height:23px;font-size:16.67px;color:#808080;font-family:'Liberation Mono',monospace;-webkit-text-stroke:0.3px #e0e0e0;">19</span>
<span class="t" style="left:260.00px;top:519.00px;line-height:23px;font-size:16.67px;color:#000080;font-family:'Liberation Mono',monospace;-webkit-text-stroke:0.3px #fff;">height</span>
<span class="t" style="left:320.00px;top:519.00px;line-height:23px;font-size:16.67px;color:#000;font-family:'Liberation Mono',monospace;-webkit-text-stroke:0.3px #fff;">: 33%%;</span>
<span class="t" style="left:201.00px;top:539.00px;line-height:23px;font-size:16.67px;color:#808080;font-family:'Liberation Mono',monospace;-webkit-text-stroke:0.3px #e0e0e0;">20</span>
<span class="t" style="left:260.00px;top:539.00px;line-height:23px;font-size:16.67px;color:#000080;font-family:'Liberation Mono',monospace;-webkit-text-stroke:0.3px #fff;">vertical-align</span>
<span class="t" style="left:400.00px;top:539.00px;line-height:23px;font-size:16.67px;color:#000;font-family:'Liberation Mono',monospace;-webkit-text-stroke:0.3px #fff;">: bottom;</span>
<span class="t" style="left:201.00px;top:559.00px;line-height:23px;font-size:16.67px;color:#808080;font-family:'Liberation Mono',monospace;-webkit-text-stroke:0.3px #e0e0e0;">21</span>
<span class="t" style="left:260.00px;top:559.00px;line-height:23px;font-size:16.67px;color:#000080;font-family:'Liberation Mono',monospace;-webkit-text-stroke:0.3px #fff;">text-align</span>
<span class="t" style="left:360.00px;top:559.00px;line-height:23px;font-size:16.67px;color:#000;font-family:'Liberation Mono',monospace;-webkit-text-stroke:0.3px #fff;">: center;</span>
<span class="t" style="left:201.00px;top:579.00px;line-height:23px;font-size:16.67px;color:#808080;font-family:'Liberation Mono',monospace;-webkit-text-stroke:0.3px #e0e0e0;">22</span>
<span class="t" style="left:230.00px;top:579.00px;line-height:23px;font-size:16.67px;color:#000;font-family:'Liberation Mono',monospace;-webkit-text-stroke:0.3px #fff;">}</span>
<span class="t" style="left:201.00px;top:599.00px;line-height:23px;font-size:16.67px;color:#808080;font-family:'Liberation Mono',monospace;-webkit-text-stroke:0.3px #e0e0e0;">23</span>
<div style="left:125px;top:201px;width:122px;height:21px;box-sizing:border-box;border:1px solid #000;background:#ffffe1;"></div>
<span class="t" style="left:128.00px;top:202.00px;line-height:20px;font-size:14px;color:#000;transform:scaleX(1.0115);">Section0001.xhtml</span>
<div style="left:613px;top:130px;width:411px;height:22px;box-sizing:border-box;border:1px solid #a3a1a6;background:#e9e7eb;"></div>
<span class="t" style="left:618.10px;top:133.00px;line-height:18px;font-size:12.7px;color:#000;transform:scaleX(0.9852);">Preview</span>
<svg style="left:995px;top:136px;" width="9" height="10" viewBox="0 0 9 10"><path d="M3.500 1h5v4.500h-2" fill="none" stroke="#000" stroke-width="1"/><rect x="3" y="0" width="6" height="2" fill="#000"/><path d="M0.500 4.500h5v4.500h-5z" fill="#f4f3f6" stroke="#000" stroke-width="1"/><rect x="0" y="3.500" width="6" height="2" fill="#000"/></svg>
<svg style="left:1011px;top:136px;" width="9" height="9" viewBox="0 0 9 9"><path d="M1 1.500l7 6.500M8 1.500l-7 6.500" fill="none" stroke="#000" stroke-width="1.600"/></svg>
<div style="left:613px;top:154px;width:391px;height:536px;background:#fff;"></div>
<div style="left:619px;top:154px;width:384px;height:535px;box-sizing:border-box;border:5px solid #000;background:#fff;"></div>
<span class="t" style="left:795.10px;top:312.00px;line-height:23px;font-size:17.2px;color:#000;font-family:'Liberation Serif',serif;transform:scaleX(1.2136);">text</span>
<span class="t" style="left:795.10px;top:487.00px;line-height:23px;font-size:17.2px;color:#000;font-family:'Liberation Serif',serif;transform:scaleX(1.2136);">text</span>
<div style="left:1004px;top:154px;width:20px;height:536px;background:linear-gradient(to right,#eef3fd,#fbfcff 50%,#e4ecfb);"></div>
<div style="left:1004px;top:154px;width:20px;height:21px;box-sizing:border-box;border:1px solid #8ea2c6;border-radius:2.500px;background:linear-gradient(to bottom,#f6f9fe 0,#dfe9fa 42%,#c0d3f0 55%,#b5c9ea 100%);box-shadow:inset 0 0 0 1px rgba(255,255,255,0.75);"></div>
<div style="left:1004px;top:184px;width:20px;height:484px;box-sizing:border-box;border:1px solid #8ea2c6;border-radius:2.500px;background:linear-gradient(to right,#e6effc 0,#d4e2f8 40%,#b9cdee 100%);box-shadow:inset 0 0 0 1px rgba(255,255,255,0.75);"></div>
<div style="left:1004px;top:668px;width:20px;height:22px;box-sizing:border-box;border:1px solid #8ea2c6;border-radius:2.500px;background:linear-gradient(to bottom,#f6f9fe 0,#dfe9fa 42%,#c0d3f0 55%,#b5c9ea 100%);box-shadow:inset 0 0 0 1px rgba(255,255,255,0.75);"></div>
<svg style="left:1008px;top:160px;" width="12" height="9" viewBox="0 0 12 9"><path d="M2 6.800l4-4l4 4" fill="none" stroke="#4d5564" stroke-width="2"/></svg>
<svg style="left:1008px;top:675.5px;" width="12" height="9" viewBox="0 0 12 9"><path d="M2 2.200l4 4l4-4" fill="none" stroke="#4d5564" stroke-width="2"/></svg>
<div style="left:613px;top:689px;width:391px;height:22px;background:linear-gradient(to bottom,#fdfeff,#f2f6fd 50%,#e4ecfb);"></div>
<div style="left:613px;top:691px;width:21px;height:20px;box-sizing:border-box;border:1px solid #8ea2c6;border-radius:2.500px;background:linear-gradient(to bottom,#f6f9fe 0,#dfe9fa 42%,#c0d3f0 55%,#b5c9ea 100%);box-shadow:inset 0 0 0 1px rgba(255,255,255,0.75);"></div>
<div style="left:637px;top:691px;width:345px;height:20px;box-sizing:border-box;border:1px solid #8ea2c6;border-radius:2.500px;background:linear-gradient(to bottom,#e4eefc 0,#d3e3f9 45%,#c4d7f2 60%,#b8cce9 100%);box-shadow:inset 0 1px 0 rgba(255,255,255,0.9);"></div>
<div style="left:982px;top:691px;width:21px;height:20px;box-sizing:border-box;border:1px solid #8ea2c6;border-radius:2.500px;background:linear-gradient(to bottom,#f6f9fe 0,#dfe9fa 42%,#c0d3f0 55%,#b5c9ea 100%);box-shadow:inset 0 0 0 1px rgba(255,255,255,0.75);"></div>
<svg style="left:618px;top:695px;" width="9" height="12" viewBox="0 0 9 12"><path d="M6.800 2l-4 4l4 4" fill="none" stroke="#4d5564" stroke-width="2"/></svg>
<svg style="left:988.5px;top:695px;" width="9" height="12" viewBox="0 0 9 12"><path d="M2.200 2l4 4l-4 4" fill="none" stroke="#4d5564" stroke-width="2"/></svg>
<div style="left:1011px;top:423px;width:6px;height:1px;background:#7c92b4;"></div>
<div style="left:1011px;top:422px;width:6px;height:1px;background:rgba(255,255,255,0.8);"></div>
<div style="left:1011px;top:425px;width:6px;height:1px;background:#7c92b4;"></div>
<div style="left:1011px;top:424px;width:6px;height:1px;background:rgba(255,255,255,0.8);"></div>
<div style="left:1011px;top:427px;width:6px;height:1px;background:#7c92b4;"></div>
<div style="left:1011px;top:426px;width:6px;height:1px;background:rgba(255,255,255,0.8);"></div>
<div style="left:1011px;top:429px;width:6px;height:1px;background:#7c92b4;"></div>
<div style="left:1011px;top:428px;width:6px;height:1px;background:rgba(255,255,255,0.8);"></div>
<div style="left:806px;top:698px;width:1px;height:6px;background:#7c92b4;"></div>
<div style="left:805px;top:698px;width:1px;height:6px;background:rgba(255,255,255,0.8);"></div>
<div style="left:808px;top:698px;width:1px;height:6px;background:#7c92b4;"></div>
<div style="left:807px;top:698px;width:1px;height:6px;background:rgba(255,255,255,0.8);"></div>
<div style="left:810px;top:698px;width:1px;height:6px;background:#7c92b4;"></div>
<div style="left:809px;top:698px;width:1px;height:6px;background:rgba(255,255,255,0.8);"></div>
<div style="left:812px;top:698px;width:1px;height:6px;background:#7c92b4;"></div>
<div style="left:811px;top:698px;width:1px;height:6px;background:rgba(255,255,255,0.8);"></div>
<div style="left:613px;top:717px;width:411px;height:1px;background:#a3a1a6;"></div>
<div style="left:613px;top:718px;width:76px;height:23px;box-sizing:border-box;border:1px solid #a9b4c8;border-top:none;border-bottom:none;background:linear-gradient(to bottom,#fdfdff,#f4f3fa);border-radius:0 0 4px 4px;"></div>
<div style="left:613px;top:738px;width:76px;height:3px;background:linear-gradient(to bottom,#fbd68a,#f6b640 1px,#f0a428);border-radius:0 0 4px 4px;"></div>
<div style="left:689px;top:718px;width:128px;height:21px;box-sizing:border-box;border:1px solid #93a3be;border-top:none;border-radius:0 0 4px 0;background:linear-gradient(to bottom,#c0d4f1 0,#d2e1f6 7px,#eaf1fb 10px,#fdfeff 20px);"></div>
<span class="t" style="left:627.50px;top:721.00px;line-height:18px;font-size:12.7px;color:#000;transform:scaleX(0.9963);">Preview</span>
<span class="t" style="left:702.70px;top:720.00px;line-height:18px;font-size:12.7px;color:#000;transform:scaleX(0.9985);">Table Of Contents</span>
<span class="t" style="left:642.10px;top:748.00px;line-height:20px;font-size:14px;color:#000;transform:scaleX(0.9858);">Line: 13, Col: 13</span>
<span class="t" style="left:749.70px;top:748.00px;line-height:20px;font-size:14px;color:#000;transform:scaleX(1.0110);">100%</span>
<div style="left:743px;top:745px;width:1px;height:21px;background:#d9d7dc;"></div>
<div style="left:791px;top:745px;width:1px;height:21px;background:#d9d7dc;"></div>
<div style="left:970px;top:745px;width:1px;height:21px;background:#d9d7dc;"></div>
<div style="left:798px;top:745px;width:25px;height:24px;box-sizing:border-box;border:1px solid #2f4f92;border-radius:4px 4px 0 0;background:linear-gradient(to bottom,#fff 0,#f3f6fc 9px,#d5e1f5 10px,#b6caea 21px);box-shadow:inset 0 0 0 1px #90a7d2, inset 0 0 0 2px rgba(255,255,255,0.7);"></div>
<div style="left:977px;top:745px;width:25px;height:24px;box-sizing:border-box;border:1px solid #2f4f92;border-radius:4px 4px 0 0;background:linear-gradient(to bottom,#fff 0,#f3f6fc 9px,#d5e1f5 10px,#b6caea 21px);box-shadow:inset 0 0 0 1px #90a7d2, inset 0 0 0 2px rgba(255,255,255,0.7);"></div>
<div style="left:804px;top:755px;width:13px;height:5px;box-sizing:border-box;border:1px solid #4e78be;border-radius:1px;background:#7da2dc;"></div>
<svg style="left:982px;top:750px;" width="14" height="14" viewBox="0 0 14 14"><path d="M5.5 0.5h3v5h5v3h-5v5h-3v-5h-5v-3h5Z" fill="#8db2e6" stroke="#4e78be" stroke-width="1"/></svg>
<div style="left:830px;top:751px;width:139px;height:4px;box-sizing:border-box;border:1px solid #cfcdc0;border-top:1px solid #a9a79c;border-radius:2px;background:#f8f6ec;"></div>
<div style="left:836px;top:763px;width:1px;height:3px;background:#7a7a7a;"></div>
<div style="left:900px;top:763px;width:1px;height:3px;background:#7a7a7a;"></div>
<div style="left:963px;top:763px;width:1px;height:3px;background:#7a7a7a;"></div>
<svg style="left:895px;top:744px;" width="11" height="19" viewBox="0 0 11 19"><defs><linearGradient id="sh" x1="0" y1="0" x2="1" y2="0"><stop offset="0" stop-color="#f4f4fa"/><stop offset="0.5" stop-color="#d2d2e2"/><stop offset="1" stop-color="#b4b4ca"/></linearGradient></defs>
<path d="M1.5 2.5q0-1.5 1.5-1.5h5q1.5 0 1.5 1.5v10.5l-4 4.5l-4-4.5Z" fill="url(#sh)" stroke="#8a94a8" stroke-width="1"/>
<path d="M1.5 2q0-1 1.5-1h5q1.5 0 1.5 1" fill="none" stroke="#38c038" stroke-width="1.6"/>
<path d="M1.5 13.2l4 4.3l4-4.3" fill="none" stroke="#38b038" stroke-width="1.3"/></svg>
<div style="left:1020px;top:755px;width:2px;height:2px;background:#bdbbc2;box-shadow:1px 1px 0 #fff;"></div>
<div style="left:1017px;top:758px;width:2px;height:2px;background:#bdbbc2;box-shadow:1px 1px 0 #fff;"></div>
<div style="left:1020px;top:758px;width:2px;height:2px;background:#bdbbc2;box-shadow:1px 1px 0 #fff;"></div>
<div style="left:1014px;top:761px;width:2px;height:2px;background:#bdbbc2;box-shadow:1px 1px 0 #fff;"></div>
<div style="left:1017px;top:761px;width:2px;height:2px;background:#bdbbc2;box-shadow:1px 1px 0 #fff;"></div>
<div style="left:1020px;top:761px;width:2px;height:2px;background:#bdbbc2;box-shadow:1px 1px 0 #fff;"></div>
<div style="left:0px;top:765px;width:1024px;height:1px;background:#fbfbfd;"></div>
<div style="left:0px;top:766px;width:1024px;height:1px;background:#1c2f24;"></div>
<div style="left:0px;top:767px;width:1024px;height:1px;background:#4f7fc4;"></div>
<div style="left:938px;top:6px;width:26px;height:26px;box-sizing:border-box;border:1px solid #3c68c4;border-radius:4px;background:linear-gradient(to bottom,#7eade8 0,#6a9fe4 10px,#4a88d8 11px,#3c78cc 19px,#5486d0 24px);box-shadow:inset 0 0 0 1px rgba(190,215,245,0.75);"></div>
<div style="left:966px;top:6px;width:26px;height:26px;box-sizing:border-box;border:1px solid #3c68c4;border-radius:4px;background:linear-gradient(to bottom,#7eade8 0,#6a9fe4 10px,#4a88d8 11px,#3c78cc 19px,#5486d0 24px);box-shadow:inset 0 0 0 1px rgba(190,215,245,0.75);"></div>
<div style="left:996px;top:6px;width:26px;height:26px;box-sizing:border-box;border:1px solid #c8683c;border-radius:4px;background:linear-gradient(to bottom,#d09274 0,#cc8462 10px,#d4501f 11px,#dc4a14 19px,#e0683c 24px);box-shadow:inset 0 0 0 1px rgba(240,180,150,0.7);"></div>
<div style="left:942px;top:25px;width:11px;height:4px;background:#fff;"></div>
<div style="left:970px;top:10px;width:19px;height:19px;box-sizing:border-box;border:2px solid #fff;border-top-width:4px;"></div>
<svg style="left:997px;top:8px;" width="24" height="23" viewBox="0 0 24 23"><path d="M3 2.5l17.5 18M20.5 2.5l-17.5 18" stroke="#fff" stroke-width="3.6" fill="none"/></svg>
<svg style="left:17px;top:66px;" width="20" height="22" viewBox="0 0 20 22"><defs><linearGradient id="nd" x1="0" y1="0" x2="1" y2="1"><stop offset="0" stop-color="#dcdcdc"/><stop offset="1" stop-color="#f6f6f6"/></linearGradient>
<radialGradient id="ng"><stop offset="0" stop-color="#fffff4"/><stop offset="0.300" stop-color="#fdfbd8"/><stop offset="0.550" stop-color="#f3e76c"/><stop offset="0.800" stop-color="#f1e35c" stop-opacity="0.600"/><stop offset="1" stop-color="#f0e050" stop-opacity="0"/></radialGradient></defs>
<rect x="1.5" y="1.5" width="17" height="19" rx="1.5" fill="#fff" stroke="#8a8a84"/>
<rect x="3" y="3" width="14" height="16" fill="url(#nd)"/>
<rect x="3.3" y="8" width="1" height="1" fill="#999"/><rect x="3.3" y="13" width="1" height="1" fill="#999"/>
<circle cx="16.800" cy="4.300" r="3.400" fill="url(#ng)"/></svg>
<svg style="left:46px;top:65px;" width="24" height="21" viewBox="0 0 24 21"><defs><linearGradient id="ob" x1="0" y1="0" x2="0" y2="1"><stop offset="0" stop-color="#5f92d4"/><stop offset="0.15" stop-color="#9abde8"/><stop offset="1" stop-color="#6a9ad8"/></linearGradient>
<linearGradient id="og" x1="0" y1="0" x2="1" y2="0"><stop offset="0" stop-color="#7c7c7c"/><stop offset="0.500" stop-color="#bdbdbd"/><stop offset="1" stop-color="#9a9a9a"/></linearGradient></defs>
<path d="M1.5 4.5q0-1 1-1h4l1 1.5h10v14h-15Z" fill="url(#og)" stroke="#6a6a6a"/>
<path d="M7 9l2-7.5h12.5q1 0 0.8 1l-1.8 7Z" fill="#fdfdfd" stroke="#9a9a94" stroke-width="0.9"/>
<path d="M10.500 3.500h9M10 5.500h9M9.500 7.500h6" stroke="#b4b4b0" stroke-width="1"/>
<path d="M3.2 19.5L6 9.5h16.5q0.8 0 0.6 0.8L20.3 19.5Z" fill="url(#ob)" stroke="#3465b0"/></svg>
<svg style="left:79px;top:66px;" width="20" height="22" viewBox="0 0 20 22"><rect x="1.5" y="1.5" width="17" height="19" rx="1.5" fill="#ebebeb" stroke="#8a8a84"/>
<rect x="2.5" y="2.5" width="15" height="17" fill="none" stroke="#f6f6f6"/>
<path d="M8 5.5h4v4h4v4h-4v4h-4v-4h-4v-4h4Z" fill="#4b8bc0"/>
<path d="M12.5 15.500h3.500" stroke="#c8c8c8" stroke-width="1"/></svg>
<svg style="left:108px;top:65px;" width="24" height="24" viewBox="0 0 24 24"><defs><linearGradient id="sa" x1="0" y1="0" x2="0" y2="1"><stop offset="0" stop-color="#3d82bd"/><stop offset="1" stop-color="#4f93cc"/></linearGradient></defs>
<path d="M4.5 6.5h15l3 9.5v5.5q0 1-1 1h-19q-1 0-1-1v-5.500Z" fill="#f2f2f2" stroke="#6e6e6a" stroke-width="1.1"/>
<path d="M1.800 16.500h20.400" stroke="#fff" stroke-width="1"/>
<rect x="2.5" y="16.5" width="19" height="5" fill="#f4f4f4"/>
<rect x="4" y="18" width="8" height="2.2" fill="#909090"/>
<path d="M13.500 18v2.200M15.500 18v2.200M17.500 18v2.200M19.500 18v2.200" stroke="#c4c4c4" stroke-width="1"/>
<path d="M9 0.800h6.500v8h3.500l-6.700 7.200l-6.800-7.200h3.500Z" fill="url(#sa)" stroke="#35719f" stroke-width="0.6"/></svg>
<svg style="left:153px;top:64px;" width="22" height="24" viewBox="0 0 22 24"><defs><linearGradient id="un" x1="0" y1="0" x2="0" y2="1"><stop offset="0" stop-color="#f6e858"/><stop offset="1" stop-color="#dcc010"/></linearGradient></defs>
<ellipse cx="12" cy="21.5" rx="7" ry="1.800" fill="#000" opacity="0.10"/>
<path d="M1.700 9.500L9.500 2V6C13.500 6 18.200 8 18.200 13C18.200 17 14 21 9.500 22.500C12 20.500 14.300 17.500 14.300 15C14.300 13 12.500 12.500 9.500 12.700V17.300Z" fill="url(#un)" stroke="#c9a800" stroke-width="1"/></svg>
<svg style="left:185px;top:64px;" width="22" height="24" viewBox="0 0 22 24"><defs><linearGradient id="re" x1="0" y1="0" x2="0" y2="1"><stop offset="0" stop-color="#8ae83a"/><stop offset="1" stop-color="#5cc41a"/></linearGradient></defs>
<ellipse cx="11" cy="21.500" rx="7" ry="1.800" fill="#000" opacity="0.10"/>
<path d="M20.300 9.500L12.500 2V6C8.500 6 3.800 8 3.800 13C3.800 17 8 21 12.500 22.500C10 20.500 7.700 17.500 7.700 15C7.700 13 9.500 12.500 12.500 12.700V17.300Z" fill="url(#re)" stroke="#4aa80e" stroke-width="1"/></svg>
<svg style="left:224px;top:65px;" width="20" height="23" viewBox="0 0 20 23"><path d="M3 2.500q1.500-1.500 3 0l7.500 13l-2.500 1.500Z" fill="#f2f2f4" stroke="#a4a4a4" stroke-width="1"/>
<path d="M17 2.500q-1.500-1.500-3 0l-7.500 13l2.500 1.500Z" fill="#f2f2f4" stroke="#a4a4a4" stroke-width="1"/>
<circle cx="5.300" cy="18.300" r="2.700" fill="none" stroke="#8e8e8e" stroke-width="2"/>
<circle cx="14.300" cy="18.300" r="2.700" fill="none" stroke="#8e8e8e" stroke-width="2"/>
</svg>
<svg style="left:254px;top:66px;" width="23" height="23" viewBox="0 0 23 23"><rect x="0.500" y="0.500" width="14" height="17" rx="1" fill="#f1f1f3" stroke="#c6c6c8"/>
<path d="M3 4.500h8M3 6.500h8M3 8.500h5M3 10.500h4M3 12.500h4" stroke="#dadadc" stroke-width="1"/>
<path d="M7.500 4.500h14v13l-4 4h-10Z" fill="#f8f8fa" stroke="#a9a9ab"/>
<path d="M10 8.500h9M10 10.500h9M10 12.500h7M10 14.500h9" stroke="#bdbdbf" stroke-width="1"/>
<path d="M21.500 17.500h-4v4Z" fill="#e2e2e4" stroke="#a9a9ab" stroke-width="0.800"/></svg>
<svg style="left:286px;top:65px;" width="21" height="23" viewBox="0 0 21 23"><defs><linearGradient id="pp" x1="0" y1="0" x2="1" y2="1"><stop offset="0" stop-color="#fff"/><stop offset="1" stop-color="#dcdcd6"/></linearGradient></defs>
<rect x="1.500" y="3.500" width="17.500" height="18.500" rx="2" fill="#c98c1c" stroke="#8c5c04"/>
<path d="M4 5.500h12.500v11.500l-3.500 3h-9Z" fill="url(#pp)" stroke="#5f6870" stroke-width="1"/>
<path d="M16.500 17h-3.500v3" fill="none" stroke="#80888e" stroke-width="0.800"/>
<path d="M6.500 2.500q0-1.500 1.500-1.500h4.500q1.500 0 1.500 1.500l1 2.500h-9.500Z" fill="#a4a49a" stroke="#74746c" stroke-width="0.800"/>
<path d="M6.500 8.500h7.500M6.500 10.500h7.500M6.500 12.500h4.500" stroke="#8e8e8a" stroke-width="1"/></svg>
<svg style="left:324px;top:66px;" width="23" height="23" viewBox="0 0 23 23"><defs><radialGradient id="fl" cx="0.350" cy="0.350" r="0.800"><stop offset="0" stop-color="#e8f2fc"/><stop offset="0.600" stop-color="#8fbdec"/><stop offset="1" stop-color="#5c98dc"/></radialGradient></defs>
<path d="M1.500 1.500h14v17h-14Z" fill="#f6f6f4" stroke="#8a8a86"/>
<path d="M4 4.500h9M4 6.500h9M4 8.500h4" stroke="#c2c2be" stroke-width="1"/>
<path d="M15.500 17.500l5 5" stroke="#8a8a8a" stroke-width="3.400" stroke-linecap="round"/>
<path d="M16 18l4.300 4.300" stroke="#f2f2f2" stroke-width="1.500" stroke-linecap="round"/>
<circle cx="11.800" cy="13.400" r="5.300" fill="url(#fl)" stroke="#8e8e8e" stroke-width="1.700"/>
<circle cx="11.800" cy="13.400" r="4.300" fill="none" stroke="#fff" stroke-width="0.700" opacity="0.800"/></svg>
<svg style="left:369px;top:66px;" width="21" height="21" viewBox="0 0 21 21"><path d="M1.500 2v15.700q5-0.500 8.500 2q3.500-2.500 9-2v-15.700" fill="#f1f1f3" stroke="#a2a2a4" stroke-width="1.200"/>
<path d="M3.500 1.700q3.500-0.300 6 1.500v15q-2.500-1.800-6-1.500Z" fill="#fff" stroke="#d0d0d2" stroke-width="0.700"/>
<path d="M17 1.700q-4-0.300-6.500 1.500v15q2.500-1.800 6.500-1.500Z" fill="#fff" stroke="#d0d0d2" stroke-width="0.700"/>
<path d="M10 3.500v15.500" stroke="#adadaf" stroke-width="1.200"/>
<path d="M7.500 2.800v14.500M13 2.500v14.500" stroke="#e4e4e6" stroke-width="1.500"/></svg>
<svg style="left:399px;top:71px;" width="22" height="15" viewBox="0 0 22 15"><defs><linearGradient id="cg" x1="0" y1="0" x2="0" y2="1"><stop offset="0" stop-color="#b4b4b4"/><stop offset="1" stop-color="#6e6e6e"/></linearGradient></defs>
<ellipse cx="11" cy="13.500" rx="8" ry="1.300" fill="#000" opacity="0.050"/>
<path d="M9 2.500l-7 5l7 5" fill="none" stroke="url(#cg)" stroke-width="2.100"/>
<path d="M13 2.500l7 5l-7 5" fill="none" stroke="url(#cg)" stroke-width="2.100"/></svg>
<svg style="left:444px;top:67px;" width="23" height="21" viewBox="0 0 23 21"><rect x="1.700" y="4.700" width="7" height="9" fill="#fff" stroke="#8e8e8e" stroke-width="1.300"/>
<path d="M3.500 7.500h3.500M3.500 9.500h3.500M3.500 11.500h3.500" stroke="#cfcfcf" stroke-width="1"/>
<rect x="12.700" y="1.700" width="7" height="9" fill="#fff" stroke="#8e8e8e" stroke-width="1.300"/>
<path d="M14.500 4.500h3.500M14.500 6.500h3.500" stroke="#cfcfcf" stroke-width="1"/>
<rect x="14.700" y="8.700" width="7" height="9" fill="#fff" stroke="#8e8e8e" stroke-width="1.300"/>
<path d="M16.500 11.500h3.500M16.500 13.500h3.500M16.500 15.500h3.500" stroke="#cfcfcf" stroke-width="1"/>
<path d="M3 12.500h6.500v-2.500l4.500 5l-4.500 5v-2.500h-6.500Z" fill="#959595" stroke="#858585" stroke-width="0.600"/></svg>
<svg style="left:481px;top:67px;" width="24" height="19" viewBox="0 0 24 19"><defs><linearGradient id="im" x1="0" y1="0" x2="0" y2="1"><stop offset="0" stop-color="#9a9a9a"/><stop offset="0.550" stop-color="#c6c6c6"/><stop offset="0.600" stop-color="#9a9a9a"/><stop offset="1" stop-color="#8a8a8a"/></linearGradient></defs>
<path d="M2.500 1.500h19q1 0 1 1v12l-3 3h-17q-1 0-1-1v-14q0-1 1-1Z" fill="#f3f3f3" stroke="#c4c4c4"/>
<path d="M3.500 3.500h18v10.500l-2 2h-16Z" fill="url(#im)" stroke="#8e8e8e" stroke-width="0.800"/>
<circle cx="7" cy="6.800" r="1.600" fill="#fff"/>
<path d="M22.500 14.500h-3v3Z" fill="#e6e6e6" stroke="#c4c4c4" stroke-width="0.800"/></svg>
<span class="t" style="left:515.20px;top:63.00px;line-height:28px;font-size:21.5px;color:#3a3a3a;font-family:'Liberation Serif',serif;font-weight:bold;transform:scaleX(0.9758);">Ω</span>
<svg style="left:545px;top:66px;" width="20" height="21" viewBox="0 0 20 21"><g fill="none" stroke="#a2a2a2" stroke-width="1.800"><circle cx="9.700" cy="3.900" r="1.900" stroke-width="1.500"/>
<path d="M9.700 5.800v12.500M5.300 8h8.800"/>
<path d="M2 12q1.500 6.300 7.700 6.300q6.200 0 7.700-6.300" stroke-width="2"/></g></svg>
<svg style="left:574px;top:71px;" width="24" height="12" viewBox="0 0 24 12"><g fill="none" stroke="#9c9c9c" stroke-width="1.900"><rect x="1.900" y="2.500" width="7.800" height="6.600" rx="3.300"/><rect x="14.300" y="2.500" width="8" height="6.600" rx="3.300"/><path d="M7 5.800h10"/></g></svg>
<svg style="left:619px;top:67px;" width="22" height="19" viewBox="0 0 22 19"><path d="M1.700 9.500l8-8v4.500h9.500v7h-9.500v4.500Z" fill="#dddde1" stroke="#c3c3c7" stroke-width="1.100"/></svg>
<svg style="left:664px;top:65px;" width="24" height="23" viewBox="0 0 24 23"><defs><linearGradient id="he" x1="0" y1="0" x2="0.300" y2="1"><stop offset="0" stop-color="#e2573c"/><stop offset="0.450" stop-color="#d83a1e"/><stop offset="0.500" stop-color="#cc2210"/><stop offset="1" stop-color="#c41a0c"/></linearGradient></defs>
<ellipse cx="12.500" cy="20.300" rx="7.500" ry="1.800" fill="#000" opacity="0.220"/>
<path d="M12 5q-1.500-3-5-3q-4.500 0-4.800 4.500q0 3.500 3.800 7l6 6.200l6-6.200q3.800-3.500 3.800-7q-0.300-4.500-4.800-4.500q-3.500 0-5 3Z" fill="url(#he)" stroke="#b3120c" stroke-width="1.100"/></svg>
<svg style="left:711px;top:66px;" width="21" height="23" viewBox="0 0 21 23"><defs><linearGradient id="bk" x1="0" y1="0" x2="1" y2="0"><stop offset="0" stop-color="#e4e2da"/><stop offset="0.250" stop-color="#fff"/><stop offset="0.750" stop-color="#fff"/><stop offset="1" stop-color="#dcdad2"/></linearGradient></defs>
<path d="M1.300 4v14.500l9.200 3l9.200-3v-14.500" fill="#c8c6be" stroke="#54524e" stroke-width="1.300"/>
<path d="M2.800 3q4-1.500 7.700 0.500q3.700-2 7.700-0.500v14.500q-4-0.500-7.700 2.200q-3.700-2.700-7.700-2.200Z" fill="url(#bk)" stroke="#a9a7a0" stroke-width="0.600"/><circle cx="10" cy="4.800" r="1.900" fill="#5c0a4c"/><path d="M8.300 8.500h3.700v8.500h2v1.300h-8v-1.300h2.300Z" fill="#5c0a4c"/></svg>
<svg style="left:742px;top:66px;" width="21" height="23" viewBox="0 0 21 23"><defs><linearGradient id="bk" x1="0" y1="0" x2="1" y2="0"><stop offset="0" stop-color="#e4e2da"/><stop offset="0.250" stop-color="#fff"/><stop offset="0.750" stop-color="#fff"/><stop offset="1" stop-color="#dcdad2"/></linearGradient></defs>
<path d="M1.300 4v14.500l9.200 3l9.200-3v-14.500" fill="#c8c6be" stroke="#54524e" stroke-width="1.300"/>
<path d="M2.800 3q4-1.500 7.700 0.500q3.700-2 7.700-0.500v14.500q-4-0.500-7.700 2.200q-3.700-2.700-7.700-2.200Z" fill="url(#bk)" stroke="#a9a7a0" stroke-width="0.600"/><path d="M5 7.900h10M5 11.900h10M5 15.900h10" stroke="#5c0a4c" stroke-width="1.900"/></svg>
<span class="t" style="left:773.70px;top:63.00px;line-height:16px;font-size:10.5px;color:#000;transform:scaleX(0.9216);letter-spacing:1px;">abc</span>
<svg style="left:776px;top:74px;" width="14" height="14" viewBox="0 0 14 14"><ellipse cx="6.500" cy="12.600" rx="5.500" ry="0.900" fill="#000" opacity="0.100"/><path d="M2 7.500l4.500 4l5.500-9" fill="none" stroke="#5cb424" stroke-width="3.300"/><path d="M2 7.500l4.500 4l5.500-9" fill="none" stroke="#84da48" stroke-width="1.900"/></svg>
<svg style="left:802px;top:65px;" width="24" height="24" viewBox="0 0 24 24"><ellipse cx="12" cy="21.300" rx="8" ry="1.200" fill="#000" opacity="0.120"/><path d="M3.500 12.500l8 7.500l9-16.500" fill="none" stroke="#52ac12" stroke-width="5.200" stroke-linejoin="miter"/><path d="M3.500 12.500l8 7.500l9-16.500" fill="none" stroke="#84e234" stroke-width="3.200"/></svg>
<svg style="left:17px;top:119px;" width="20" height="4" viewBox="0 0 20 4"><path d="M1.500 1.200Q10 3.800 18.500 1.200" fill="none" stroke="#000" stroke-opacity="0.180" stroke-width="1.600"/></svg>
<div style="left:17px;top:100px;width:20px;height:21px;box-sizing:border-box;border:1px solid #b2b2b4;border-radius:1.5px;background:linear-gradient(135deg,#f8f8fa,#e9e9eb);box-shadow:inset 0 0 0 1px #fff;"></div>
<span class="t" style="left:19.50px;top:102.00px;line-height:18px;font-size:12.5px;color:#7e7e7e;font-weight:bold;transform:scaleX(0.9735);">h1</span>
<svg style="left:48px;top:119px;" width="20" height="4" viewBox="0 0 20 4"><path d="M1.500 1.200Q10 3.800 18.500 1.200" fill="none" stroke="#000" stroke-opacity="0.180" stroke-width="1.600"/></svg>
<div style="left:48px;top:100px;width:20px;height:21px;box-sizing:border-box;border:1px solid #b2b2b4;border-radius:1.5px;background:linear-gradient(135deg,#f8f8fa,#e9e9eb);box-shadow:inset 0 0 0 1px #fff;"></div>
<span class="t" style="left:50.50px;top:102.00px;line-height:18px;font-size:12.5px;color:#7e7e7e;font-weight:bold;transform:scaleX(0.9735);">h2</span>
<svg style="left:79px;top:119px;" width="20" height="4" viewBox="0 0 20 4"><path d="M1.500 1.200Q10 3.800 18.500 1.200" fill="none" stroke="#000" stroke-opacity="0.180" stroke-width="1.600"/></svg>
<div style="left:79px;top:100px;width:20px;height:21px;box-sizing:border-box;border:1px solid #b2b2b4;border-radius:1.5px;background:linear-gradient(135deg,#f8f8fa,#e9e9eb);box-shadow:inset 0 0 0 1px #fff;"></div>
<span class="t" style="left:81.50px;top:102.00px;line-height:18px;font-size:12.5px;color:#7e7e7e;font-weight:bold;transform:scaleX(0.9735);">h3</span>
<svg style="left:110px;top:119px;" width="20" height="4" viewBox="0 0 20 4"><path d="M1.500 1.200Q10 3.800 18.500 1.200" fill="none" stroke="#000" stroke-opacity="0.180" stroke-width="1.600"/></svg>
<div style="left:110px;top:100px;width:20px;height:21px;box-sizing:border-box;border:1px solid #b2b2b4;border-radius:1.5px;background:linear-gradient(135deg,#f8f8fa,#e9e9eb);box-shadow:inset 0 0 0 1px #fff;"></div>
<span class="t" style="left:112.50px;top:102.00px;line-height:18px;font-size:12.5px;color:#7e7e7e;font-weight:bold;transform:scaleX(0.9735);">h4</span>
<svg style="left:141px;top:119px;" width="20" height="4" viewBox="0 0 20 4"><path d="M1.500 1.200Q10 3.800 18.500 1.200" fill="none" stroke="#000" stroke-opacity="0.180" stroke-width="1.600"/></svg>
<div style="left:141px;top:100px;width:20px;height:21px;box-sizing:border-box;border:1px solid #b2b2b4;border-radius:1.5px;background:linear-gradient(135deg,#f8f8fa,#e9e9eb);box-shadow:inset 0 0 0 1px #fff;"></div>
<span class="t" style="left:143.50px;top:102.00px;line-height:18px;font-size:12.5px;color:#7e7e7e;font-weight:bold;transform:scaleX(0.9735);">h5</span>
<svg style="left:172px;top:119px;" width="20" height="4" viewBox="0 0 20 4"><path d="M1.500 1.200Q10 3.800 18.500 1.200" fill="none" stroke="#000" stroke-opacity="0.180" stroke-width="1.600"/></svg>
<div style="left:172px;top:100px;width:20px;height:21px;box-sizing:border-box;border:1px solid #b2b2b4;border-radius:1.5px;background:linear-gradient(135deg,#f8f8fa,#e9e9eb);box-shadow:inset 0 0 0 1px #fff;"></div>
<span class="t" style="left:174.50px;top:102.00px;line-height:18px;font-size:12.5px;color:#7e7e7e;font-weight:bold;transform:scaleX(0.9735);">h6</span>
<svg style="left:203px;top:119px;" width="20" height="4" viewBox="0 0 20 4"><path d="M1.500 1.200Q10 3.800 18.500 1.200" fill="none" stroke="#000" stroke-opacity="0.180" stroke-width="1.600"/></svg>
<div style="left:203px;top:100px;width:20px;height:21px;box-sizing:border-box;border:1px solid #b2b2b4;border-radius:1.5px;background:linear-gradient(135deg,#f8f8fa,#e9e9eb);box-shadow:inset 0 0 0 1px #fff;"></div>
<span class="t" style="left:209.50px;top:102.00px;line-height:18px;font-size:12.5px;color:#7e7e7e;font-weight:bold;transform:scaleX(0.9823);">p</span>
<svg style="left:247px;top:102px;" width="21" height="18" viewBox="0 0 21 18"><path d="M1 16L7.500 1H13.500L20 16H14.300L13.200 12.900H7.800L6.700 16ZM10.500 5L12.500 10.200H8.500Z" fill="#6f9fdc" stroke="#2f66b4" stroke-width="1.2" fill-rule="evenodd" stroke-linejoin="round"/><path d="M2.500 15.300L8.300 2H12.700" fill="none" stroke="#a9c8f0" stroke-width="0.900" opacity="0.900"/></svg>
<svg style="left:279px;top:102px;" width="20" height="17" viewBox="0 0 20 17"><g transform="translate(1,0)"><path d="M1 16L13 1.500H17L16.200 16H13.300L13.500 12.500H6.800L4 16ZM8.500 10.500H13.600L14 4Z" fill="#8fb6e6" stroke="#2f66b4" stroke-width="1.100" fill-rule="evenodd" stroke-linejoin="round"/></g></svg>
<svg style="left:311px;top:100px;" width="18" height="22" viewBox="0 0 18 22"><path d="M0.700 15.800L7 1H10L16.300 15.800H13.400L12 12.300H5L3.600 15.800ZM8.500 4L11 10.200H6Z" fill="#8fb6e6" stroke="#2f66b4" stroke-width="1.1" fill-rule="evenodd" stroke-linejoin="round"/><rect x="0.600" y="18.500" width="16.800" height="2.200" fill="#6f9fdc" stroke="#2f66b4" stroke-width="0.900"/></svg>
<svg style="left:342px;top:102px;" width="18" height="17" viewBox="0 0 18 17"><path d="M0.600 15.500L7 1H10L16.400 15.500H13.500L12.200 12.400H4.800L3.500 15.500ZM8.500 4L11.200 10.400H5.800Z" fill="#8fb6e6" stroke="#2f66b4" stroke-width="1.1" fill-rule="evenodd" stroke-linejoin="round"/><rect x="0.200" y="7.200" width="17.400" height="2.500" fill="#6f9fdc" stroke="#2f66b4" stroke-width="0.900"/></svg>
<svg style="left:371px;top:101px;" width="16" height="15" viewBox="0 0 16 15"><path d="M1 13.600L6.500 1H9.500L15 13.600H12.200L11.100 10.900H4.900L3.800 13.600ZM8 3.800L10.300 9H5.700Z" fill="#e9e9eb" stroke="#adadaf" stroke-width="1.1" fill-rule="evenodd" stroke-linejoin="round"/></svg>
<span class="t" style="left:386.50px;top:107.60px;line-height:16px;font-size:10.5px;color:#a0a0a2;font-weight:bold;transform:scaleX(1.0618);">2</span>
<svg style="left:403px;top:106px;" width="16" height="15" viewBox="0 0 16 15"><path d="M1 13.600L6.500 1H9.500L15 13.600H12.200L11.100 10.900H4.900L3.800 13.600ZM8 3.800L10.300 9H5.700Z" fill="#e9e9eb" stroke="#adadaf" stroke-width="1.1" fill-rule="evenodd" stroke-linejoin="round"/></svg>
<span class="t" style="left:416.50px;top:98.60px;line-height:16px;font-size:10.5px;color:#a0a0a2;font-weight:bold;transform:scaleX(1.0618);">2</span>
<svg style="left:448px;top:119px;" width="20" height="4" viewBox="0 0 20 4"><path d="M1.500 1.200Q10 3.800 18.500 1.200" fill="none" stroke="#000" stroke-opacity="0.180" stroke-width="1.600"/></svg>
<div style="left:448px;top:100px;width:20px;height:21px;box-sizing:border-box;border:1px solid #8c8c86;border-radius:1.5px;background:linear-gradient(135deg,#f8f8fa,#e9e9eb);box-shadow:inset 0 0 0 1px #fff;"></div>
<div style="left:451px;top:104px;width:12px;height:1px;background:#8c8c88;"></div>
<div style="left:451px;top:107px;width:11px;height:1px;background:#8c8c88;"></div>
<div style="left:451px;top:110px;width:10px;height:1px;background:#8c8c88;"></div>
<div style="left:451px;top:113px;width:12px;height:1px;background:#8c8c88;"></div>
<div style="left:451px;top:116px;width:7px;height:1px;background:#8c8c88;"></div>
<svg style="left:479px;top:119px;" width="20" height="4" viewBox="0 0 20 4"><path d="M1.500 1.200Q10 3.800 18.500 1.200" fill="none" stroke="#000" stroke-opacity="0.180" stroke-width="1.600"/></svg>
<div style="left:479px;top:100px;width:20px;height:21px;box-sizing:border-box;border:1px solid #8c8c86;border-radius:1.5px;background:linear-gradient(135deg,#f8f8fa,#e9e9eb);box-shadow:inset 0 0 0 1px #fff;"></div>
<div style="left:483px;top:104px;width:12px;height:1px;background:#8c8c88;"></div>
<div style="left:484px;top:107px;width:10px;height:1px;background:#8c8c88;"></div>
<div style="left:485px;top:110px;width:8px;height:1px;background:#8c8c88;"></div>
<div style="left:483px;top:113px;width:12px;height:1px;background:#8c8c88;"></div>
<div style="left:485px;top:116px;width:8px;height:1px;background:#8c8c88;"></div>
<svg style="left:510px;top:119px;" width="20" height="4" viewBox="0 0 20 4"><path d="M1.500 1.200Q10 3.800 18.500 1.200" fill="none" stroke="#000" stroke-opacity="0.180" stroke-width="1.600"/></svg>
<div style="left:510px;top:100px;width:20px;height:21px;box-sizing:border-box;border:1px solid #8c8c86;border-radius:1.5px;background:linear-gradient(135deg,#f8f8fa,#e9e9eb);box-shadow:inset 0 0 0 1px #fff;"></div>
<div style="left:515px;top:104px;width:12px;height:1px;background:#8c8c88;"></div>
<div style="left:516px;top:107px;width:11px;height:1px;background:#8c8c88;"></div>
<div style="left:517px;top:110px;width:10px;height:1px;background:#8c8c88;"></div>
<div style="left:515px;top:113px;width:12px;height:1px;background:#8c8c88;"></div>
<div style="left:520px;top:116px;width:7px;height:1px;background:#8c8c88;"></div>
<svg style="left:541px;top:119px;" width="20" height="4" viewBox="0 0 20 4"><path d="M1.500 1.200Q10 3.800 18.500 1.200" fill="none" stroke="#000" stroke-opacity="0.180" stroke-width="1.600"/></svg>
<div style="left:541px;top:100px;width:20px;height:21px;box-sizing:border-box;border:1px solid #8c8c86;border-radius:1.5px;background:linear-gradient(135deg,#f8f8fa,#e9e9eb);box-shadow:inset 0 0 0 1px #fff;"></div>
<div style="left:545px;top:104px;width:12px;height:1px;background:#8c8c88;"></div>
<div style="left:545px;top:107px;width:12px;height:1px;background:#8c8c88;"></div>
<div style="left:545px;top:110px;width:12px;height:1px;background:#8c8c88;"></div>
<div style="left:545px;top:113px;width:12px;height:1px;background:#8c8c88;"></div>
<div style="left:545px;top:116px;width:12px;height:1px;background:#8c8c88;"></div>
<svg style="left:586px;top:119px;" width="20" height="4" viewBox="0 0 20 4"><path d="M1.500 1.200Q10 3.800 18.500 1.200" fill="none" stroke="#000" stroke-opacity="0.180" stroke-width="1.600"/></svg>
<div style="left:586px;top:100px;width:20px;height:21px;box-sizing:border-box;border:1px solid #b2b2b4;border-radius:1.5px;background:linear-gradient(135deg,#f8f8fa,#e9e9eb);box-shadow:inset 0 0 0 1px #fff;"></div>
<div style="left:589px;top:104px;width:3px;height:3px;background:#a4a4a6;border-radius:50%;"></div>
<div style="left:593px;top:105px;width:9px;height:1px;background:#b6b6b8;"></div>
<div style="left:589px;top:109px;width:3px;height:3px;background:#a4a4a6;border-radius:50%;"></div>
<div style="left:593px;top:110px;width:9px;height:1px;background:#b6b6b8;"></div>
<div style="left:589px;top:114px;width:3px;height:3px;background:#a4a4a6;border-radius:50%;"></div>
<div style="left:593px;top:115px;width:9px;height:1px;background:#b6b6b8;"></div>
<svg style="left:617px;top:119px;" width="20" height="4" viewBox="0 0 20 4"><path d="M1.500 1.200Q10 3.800 18.500 1.200" fill="none" stroke="#000" stroke-opacity="0.180" stroke-width="1.600"/></svg>
<div style="left:617px;top:100px;width:20px;height:21px;box-sizing:border-box;border:1px solid #b2b2b4;border-radius:1.5px;background:linear-gradient(135deg,#f8f8fa,#e9e9eb);box-shadow:inset 0 0 0 1px #fff;"></div>
<div style="left:624px;top:105px;width:9px;height:1px;background:#b6b6b8;"></div>
<div style="left:624px;top:110px;width:9px;height:1px;background:#b6b6b8;"></div>
<div style="left:624px;top:115px;width:9px;height:1px;background:#b6b6b8;"></div>
<svg style="left:619px;top:102px;" width="6" height="17" viewBox="0 0 6 17"><path d="M2 1h1v1h-1zM1 2h1v1h-1zM2 2h1v1h-1zM2 3h1v1h-1zM2 4h1v1h-1zM1 5h1v1h-1zM2 5h1v1h-1zM3 5h1v1h-1zM1 6h1v1h-1zM2 6h1v1h-1zM3 7h1v1h-1zM2 8h1v1h-1zM1 9h1v1h-1zM1 10h1v1h-1zM2 10h1v1h-1zM3 10h1v1h-1zM1 11h1v1h-1zM2 11h1v1h-1zM3 11h1v1h-1zM3 12h1v1h-1zM2 13h1v1h-1zM3 14h1v1h-1zM1 15h1v1h-1zM2 15h1v1h-1z" fill="#8a8a8c" shape-rendering="crispEdges"/></svg>
<svg style="left:662px;top:119px;" width="20" height="4" viewBox="0 0 20 4"><path d="M1.500 1.200Q10 3.800 18.500 1.200" fill="none" stroke="#000" stroke-opacity="0.180" stroke-width="1.600"/></svg>
<div style="left:662px;top:100px;width:20px;height:21px;box-sizing:border-box;border:1px solid #b2b2b4;border-radius:1.5px;background:linear-gradient(135deg,#f8f8fa,#e9e9eb);box-shadow:inset 0 0 0 1px #fff;"></div>
<div style="left:666px;top:103px;width:6px;height:1px;background:#b0b0b2;"></div>
<div style="left:666px;top:105px;width:8px;height:1px;background:#b0b0b2;"></div>
<div style="left:666px;top:107px;width:6px;height:1px;background:#b0b0b2;"></div>
<svg style="left:664px;top:108px;" width="16" height="12" viewBox="0 0 16 12"><defs><linearGradient id="oa" x1="0" y1="0" x2="1" y2="0"><stop offset="0.350" stop-color="#8a8a8a"/><stop offset="1" stop-color="#8a8a8a" stop-opacity="0"/></linearGradient></defs><path d="M1.800 5.500l4.700-4.700v2.200h8v5h-8v2.200Z" fill="url(#oa)"/></svg>
<svg style="left:693px;top:119px;" width="20" height="4" viewBox="0 0 20 4"><path d="M1.500 1.200Q10 3.800 18.500 1.200" fill="none" stroke="#000" stroke-opacity="0.180" stroke-width="1.600"/></svg>
<div style="left:693px;top:100px;width:20px;height:21px;box-sizing:border-box;border:1px solid #b2b2b4;border-radius:1.5px;background:linear-gradient(135deg,#f8f8fa,#e9e9eb);box-shadow:inset 0 0 0 1px #fff;"></div>
<div style="left:702px;top:103px;width:6px;height:1px;background:#b0b0b2;"></div>
<div style="left:702px;top:105px;width:8px;height:1px;background:#b0b0b2;"></div>
<div style="left:702px;top:107px;width:6px;height:1px;background:#b0b0b2;"></div>
<svg style="left:695px;top:108px;" width="16" height="12" viewBox="0 0 16 12"><defs><linearGradient id="ia" x1="1" y1="0" x2="0" y2="0"><stop offset="0.350" stop-color="#8a8a8a"/><stop offset="1" stop-color="#8a8a8a" stop-opacity="0"/></linearGradient></defs><path d="M14.200 5.500l-4.700-4.700v2.200h-8v5h8v2.200Z" fill="url(#ia)"/></svg>
<svg style="left:738px;top:119px;" width="20" height="4" viewBox="0 0 20 4"><path d="M1.500 1.200Q10 3.800 18.500 1.200" fill="none" stroke="#000" stroke-opacity="0.180" stroke-width="1.600"/></svg>
<div style="left:738px;top:100px;width:20px;height:21px;box-sizing:border-box;border:1px solid #8c8c86;border-radius:1.5px;background:linear-gradient(135deg,#f8f8fa,#e9e9eb);box-shadow:inset 0 0 0 1px #fff;"></div>
<span class="t" style="left:741.50px;top:102.00px;line-height:18px;font-size:12.5px;color:#111;font-weight:bold;transform:scaleX(0.9461);">ab</span>
<svg style="left:769px;top:119px;" width="20" height="4" viewBox="0 0 20 4"><path d="M1.500 1.200Q10 3.800 18.500 1.200" fill="none" stroke="#000" stroke-opacity="0.180" stroke-width="1.600"/></svg>
<div style="left:769px;top:100px;width:20px;height:21px;box-sizing:border-box;border:1px solid #8c8c86;border-radius:1.5px;background:linear-gradient(135deg,#f8f8fa,#e9e9eb);box-shadow:inset 0 0 0 1px #fff;"></div>
<span class="t" style="left:772.00px;top:103.00px;line-height:16px;font-size:11px;color:#222;font-weight:bold;transform:scaleX(0.9000);">AB</span>
<svg style="left:800px;top:119px;" width="20" height="4" viewBox="0 0 20 4"><path d="M1.500 1.200Q10 3.800 18.500 1.200" fill="none" stroke="#000" stroke-opacity="0.180" stroke-width="1.600"/></svg>
<div style="left:800px;top:100px;width:20px;height:21px;box-sizing:border-box;border:1px solid #8c8c86;border-radius:1.5px;background:linear-gradient(135deg,#f8f8fa,#e9e9eb);box-shadow:inset 0 0 0 1px #fff;"></div>
<span class="t" style="left:803.00px;top:103.00px;line-height:16px;font-size:11.5px;color:#222;font-weight:bold;transform:scaleX(0.9133);">Ab</span>
<div style="left:804px;top:117px;width:6px;height:1px;background:#222;"></div>
<svg style="left:831px;top:119px;" width="20" height="4" viewBox="0 0 20 4"><path d="M1.500 1.200Q10 3.800 18.500 1.200" fill="none" stroke="#000" stroke-opacity="0.180" stroke-width="1.600"/></svg>
<div style="left:831px;top:100px;width:20px;height:21px;box-sizing:border-box;border:1px solid #8c8c86;border-radius:1.5px;background:linear-gradient(135deg,#f8f8fa,#e9e9eb);box-shadow:inset 0 0 0 1px #fff;"></div>
<span class="t" style="left:834.00px;top:103.00px;line-height:16px;font-size:11.5px;color:#222;font-weight:bold;transform:scaleX(0.8807);">Ab</span>
<div style="left:848.5px;top:114px;width:1px;height:1px;background:#333;"></div>
<span class="t" style="left:5.80px;top:3.00px;line-height:33px;font-size:26px;color:#561510;font-family:'Liberation Serif',serif;font-weight:bold;transform:scaleX(0.8645);-webkit-text-stroke:0.9px #561510;">S</span>
<svg style="left:212px;top:131px;" width="20" height="20" viewBox="0 0 20 20"><defs><linearGradient id="cp" x1="0" y1="0" x2="1" y2="0.300"><stop offset="0" stop-color="#c4ecf6"/><stop offset="1" stop-color="#f8fdff"/></linearGradient>
<radialGradient id="gr" cx="0.400" cy="0.350" r="0.700"><stop offset="0" stop-color="#f6c838"/><stop offset="0.600" stop-color="#e29a18"/><stop offset="1" stop-color="#b45c04"/></radialGradient></defs>
<path d="M0.800 1.500h13.600v17.300h-13.600Z" fill="url(#cp)" stroke="#a6a6dc" stroke-width="0.900"/>
<path d="M1 18.400h13.500" stroke="#4a5068" stroke-width="1.300"/><path d="M14.500 3v15.500" stroke="#8c90a8" stroke-width="0.900"/>
<path d="M1.300 1h12.700v2.400h-12.700Z" fill="#f2f2fa"/>
<path d="M3.300 0.300v3.200M5.600 0.300v3.200M7.900 0.300v3.200M10.200 0.300v3.200M12.500 0.300v3.200" stroke="#d4a820" stroke-width="1"/>
<path d="M3.500 6.500h5M3.500 9h3" stroke="#fff" stroke-width="1"/><path d="M3.500 10.500h4.500M6.500 13h2" stroke="#7ab4ec" stroke-width="1.100"/>
<g transform="translate(13,9)"><path d="M-1.300-5h2.600l0.300 1.400l1.300 0.700l1.400-0.600l1.500 2l-1 1.100l0 1.300l1.100 0.900l-1.200 2.200l-1.500-0.400l-1.100 0.800l-0.200 1.500h-2.500l-0.400-1.500l-1.200-0.700l-1.400 0.500l-1.400-2.100l1-1.100l0-1.300l-1.100-1l1.300-2.100l1.400 0.400l1.200-0.700Z" fill="url(#gr)" stroke="#b06808" stroke-width="0.500"/>
<rect x="-0.800" y="-3.600" width="1.800" height="3.600" fill="#8a8a98"/></g></svg>
<svg style="left:369px;top:132px;" width="16" height="20" viewBox="0 0 16 20"><defs><linearGradient id="ff" x1="0" y1="0" x2="1" y2="0"><stop offset="0" stop-color="#e85c14"/><stop offset="0.450" stop-color="#ec7a1c"/><stop offset="0.500" stop-color="#2486d6"/><stop offset="0.700" stop-color="#3aa2e6"/><stop offset="0.760" stop-color="#f4e070"/><stop offset="1" stop-color="#f6c82c"/></linearGradient></defs>
<path d="M1 0.800h9.500l4 4v14.400h-13.500Z" fill="#fff" stroke="#a2a2a2" stroke-width="1"/>
<path d="M1.200 1v18" stroke="#a2a2a2" stroke-width="1.600"/>
<path d="M10.500 0.800v4h4" fill="#f4f4f4" stroke="#a2a2a2" stroke-width="1"/>
<path d="M3.200 7.500q0-1 1-1h2l1-0.800h4l1 1q0.800 0.300 0.800 1.500v4.500q-0.800 3.300-5 3.500q-4.300-0.200-4.800-4Z" fill="url(#ff)"/>
<path d="M3.200 11.500q2 1.500 4.500 1l1.500 1.500l3.800-1.300q-0.800 3.300-5 3.500q-4.300-0.200-4.800-4Z" fill="#e4561a"/>
<path d="M9 13.500l3.800-0.900q-0.300 1.700-1.600 2.600Z" fill="#f4c020"/></svg>
<svg style="left:25px;top:215px;" width="20" height="20" viewBox="0 0 20 20"><defs><linearGradient id="cp" x1="0" y1="0" x2="1" y2="0.300"><stop offset="0" stop-color="#c4ecf6"/><stop offset="1" stop-color="#f8fdff"/></linearGradient>
<radialGradient id="gr" cx="0.400" cy="0.350" r="0.700"><stop offset="0" stop-color="#f6c838"/><stop offset="0.600" stop-color="#e29a18"/><stop offset="1" stop-color="#b45c04"/></radialGradient></defs>
<path d="M0.800 1.500h13.600v17.300h-13.600Z" fill="url(#cp)" stroke="#a6a6dc" stroke-width="0.900"/>
<path d="M1 18.400h13.500" stroke="#4a5068" stroke-width="1.300"/><path d="M14.500 3v15.500" stroke="#8c90a8" stroke-width="0.900"/>
<path d="M1.300 1h12.700v2.400h-12.700Z" fill="#f2f2fa"/>
<path d="M3.300 0.300v3.200M5.600 0.300v3.200M7.900 0.300v3.200M10.200 0.300v3.200M12.500 0.300v3.200" stroke="#d4a820" stroke-width="1"/>
<path d="M3.500 6.500h5M3.500 9h3" stroke="#fff" stroke-width="1"/><path d="M3.500 10.500h4.500M6.500 13h2" stroke="#7ab4ec" stroke-width="1.100"/>
<g transform="translate(13,9)"><path d="M-1.300-5h2.600l0.300 1.400l1.300 0.700l1.400-0.600l1.500 2l-1 1.100l0 1.300l1.100 0.900l-1.200 2.200l-1.500-0.400l-1.100 0.800l-0.200 1.500h-2.500l-0.400-1.500l-1.200-0.700l-1.400 0.500l-1.400-2.100l1-1.100l0-1.300l-1.100-1l1.300-2.100l1.400 0.400l1.200-0.700Z" fill="url(#gr)" stroke="#b06808" stroke-width="0.500"/>
<rect x="-0.800" y="-3.600" width="1.800" height="3.600" fill="#8a8a98"/></g></svg>
<svg style="left:26px;top:175.5px;" width="16" height="19" viewBox="0 0 16 20"><defs><linearGradient id="ff" x1="0" y1="0" x2="1" y2="0"><stop offset="0" stop-color="#e85c14"/><stop offset="0.450" stop-color="#ec7a1c"/><stop offset="0.500" stop-color="#2486d6"/><stop offset="0.700" stop-color="#3aa2e6"/><stop offset="0.760" stop-color="#f4e070"/><stop offset="1" stop-color="#f6c82c"/></linearGradient></defs>
<path d="M1 0.800h9.500l4 4v14.400h-13.500Z" fill="#fff" stroke="#a2a2a2" stroke-width="1"/>
<path d="M1.200 1v18" stroke="#a2a2a2" stroke-width="1.600"/>
<path d="M10.500 0.800v4h4" fill="#f4f4f4" stroke="#a2a2a2" stroke-width="1"/>
<path d="M3.200 7.500q0-1 1-1h2l1-0.800h4l1 1q0.800 0.300 0.800 1.500v4.500q-0.800 3.300-5 3.500q-4.300-0.200-4.800-4Z" fill="url(#ff)"/>
<path d="M3.200 11.500q2 1.500 4.500 1l1.500 1.500l3.800-1.300q-0.800 3.300-5 3.500q-4.300-0.200-4.800-4Z" fill="#e4561a"/>
<path d="M9 13.500l3.800-0.900q-0.300 1.700-1.600 2.600Z" fill="#f4c020"/></svg>
<div style="left:26px;top:176px;width:16px;height:19px;background:rgba(51,94,168,0.38);"></div>
</body></html>
